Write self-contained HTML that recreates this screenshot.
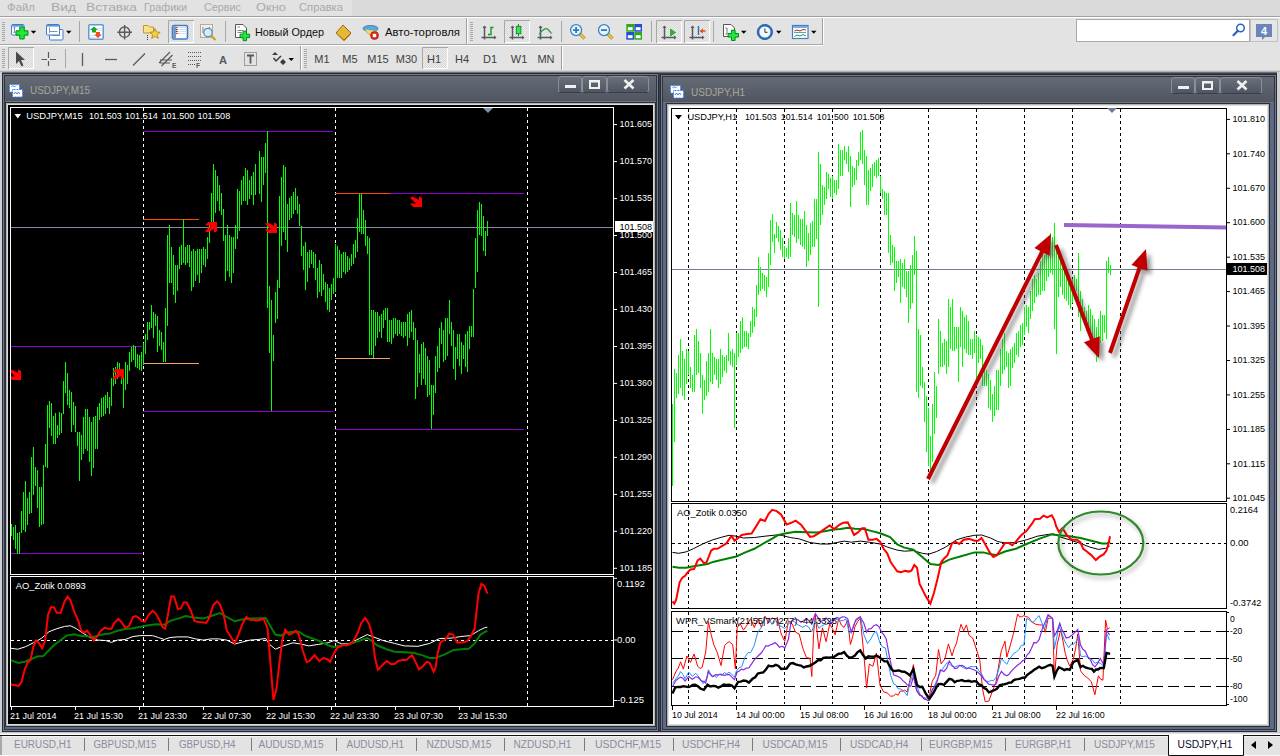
<!DOCTYPE html>
<html><head><meta charset="utf-8"><style>
html,body{margin:0;padding:0;width:1280px;height:756px;overflow:hidden;background:#e3e3e3}
svg{display:block}
text{font-family:"Liberation Sans", sans-serif}
</style></head><body>
<svg width="1280" height="756" viewBox="0 0 1280 756">
<defs>
<pattern id="dots" width="2" height="2" patternUnits="userSpaceOnUse"><rect width="2" height="2" fill="#ececec"/><rect width="1" height="1" fill="#d8d8d8"/><rect x="1" y="1" width="1" height="1" fill="#d8d8d8"/></pattern>
<linearGradient id="title" x1="0" y1="0" x2="0" y2="1"><stop offset="0" stop-color="#656b75"/><stop offset="1" stop-color="#4f5661"/></linearGradient>
<linearGradient id="btn" x1="0" y1="0" x2="0" y2="1"><stop offset="0" stop-color="#6a717c"/><stop offset="1" stop-color="#4e5560"/></linearGradient>
<filter id="blur" x="-20%" y="-20%" width="140%" height="140%"><feGaussianBlur stdDeviation="2"/></filter>
</defs>
<rect x="0" y="0" width="1280" height="756" fill="#e3e3e3" />
<rect x="0" y="0" width="1280" height="16" fill="#dadada" />
<rect x="0" y="0" width="352" height="16" fill="#e2e2e2" />
<text x="7" y="11.2" font-size="11.5" fill="#a9a9a9" text-anchor="start" font-weight="normal" textLength="28" lengthAdjust="spacingAndGlyphs" >Файл</text>
<text x="51" y="11.2" font-size="11.5" fill="#a9a9a9" text-anchor="start" font-weight="normal" textLength="25" lengthAdjust="spacingAndGlyphs" >Вид</text>
<text x="86" y="11.2" font-size="11.5" fill="#a9a9a9" text-anchor="start" font-weight="normal" textLength="51" lengthAdjust="spacingAndGlyphs" >Вставка</text>
<text x="144" y="11.2" font-size="11.5" fill="#a9a9a9" text-anchor="start" font-weight="normal" textLength="43" lengthAdjust="spacingAndGlyphs" >Графики</text>
<text x="204" y="11.2" font-size="11.5" fill="#a9a9a9" text-anchor="start" font-weight="normal" textLength="37" lengthAdjust="spacingAndGlyphs" >Сервис</text>
<text x="256" y="11.2" font-size="11.5" fill="#a9a9a9" text-anchor="start" font-weight="normal" textLength="30" lengthAdjust="spacingAndGlyphs" >Окно</text>
<text x="299" y="11.2" font-size="11.5" fill="#a9a9a9" text-anchor="start" font-weight="normal" textLength="44" lengthAdjust="spacingAndGlyphs" >Справка</text>
<line x1="0" y1="16.5" x2="1280" y2="16.5" stroke="#a0a0a0" stroke-width="1" />
<line x1="0" y1="17.5" x2="1280" y2="17.5" stroke="#ffffff" stroke-width="1" />
<line x1="0" y1="44.5" x2="823" y2="44.5" stroke="#a8a8a8" stroke-width="1" />
<line x1="0" y1="45.5" x2="823" y2="45.5" stroke="#ffffff" stroke-width="1" />
<line x1="466.5" y1="18" x2="466.5" y2="44" stroke="#a0a0a0" stroke-width="1" />
<line x1="467.5" y1="18" x2="467.5" y2="44" stroke="#ffffff" stroke-width="1" />
<line x1="822.5" y1="18" x2="822.5" y2="44" stroke="#a0a0a0" stroke-width="1" />
<line x1="823.5" y1="18" x2="823.5" y2="44" stroke="#ffffff" stroke-width="1" />
<line x1="300.5" y1="46" x2="300.5" y2="71" stroke="#a0a0a0" stroke-width="1" />
<line x1="301.5" y1="46" x2="301.5" y2="71" stroke="#ffffff" stroke-width="1" />
<line x1="561.5" y1="46" x2="561.5" y2="71" stroke="#a0a0a0" stroke-width="1" />
<line x1="562.5" y1="46" x2="562.5" y2="71" stroke="#ffffff" stroke-width="1" />
<rect x="2" y="22" width="3" height="1" fill="#a8a8a8" />
<rect x="2" y="24" width="3" height="1" fill="#a8a8a8" />
<rect x="2" y="26" width="3" height="1" fill="#a8a8a8" />
<rect x="2" y="28" width="3" height="1" fill="#a8a8a8" />
<rect x="2" y="30" width="3" height="1" fill="#a8a8a8" />
<rect x="2" y="32" width="3" height="1" fill="#a8a8a8" />
<rect x="2" y="34" width="3" height="1" fill="#a8a8a8" />
<rect x="2" y="36" width="3" height="1" fill="#a8a8a8" />
<rect x="2" y="38" width="3" height="1" fill="#a8a8a8" />
<rect x="2" y="40" width="3" height="1" fill="#a8a8a8" />
<rect x="470" y="22" width="3" height="1" fill="#a8a8a8" />
<rect x="470" y="24" width="3" height="1" fill="#a8a8a8" />
<rect x="470" y="26" width="3" height="1" fill="#a8a8a8" />
<rect x="470" y="28" width="3" height="1" fill="#a8a8a8" />
<rect x="470" y="30" width="3" height="1" fill="#a8a8a8" />
<rect x="470" y="32" width="3" height="1" fill="#a8a8a8" />
<rect x="470" y="34" width="3" height="1" fill="#a8a8a8" />
<rect x="470" y="36" width="3" height="1" fill="#a8a8a8" />
<rect x="470" y="38" width="3" height="1" fill="#a8a8a8" />
<rect x="470" y="40" width="3" height="1" fill="#a8a8a8" />
<rect x="2" y="49" width="3" height="1" fill="#a8a8a8" />
<rect x="2" y="51" width="3" height="1" fill="#a8a8a8" />
<rect x="2" y="53" width="3" height="1" fill="#a8a8a8" />
<rect x="2" y="55" width="3" height="1" fill="#a8a8a8" />
<rect x="2" y="57" width="3" height="1" fill="#a8a8a8" />
<rect x="2" y="59" width="3" height="1" fill="#a8a8a8" />
<rect x="2" y="61" width="3" height="1" fill="#a8a8a8" />
<rect x="2" y="63" width="3" height="1" fill="#a8a8a8" />
<rect x="2" y="65" width="3" height="1" fill="#a8a8a8" />
<rect x="2" y="67" width="3" height="1" fill="#a8a8a8" />
<rect x="304" y="49" width="3" height="1" fill="#a8a8a8" />
<rect x="304" y="51" width="3" height="1" fill="#a8a8a8" />
<rect x="304" y="53" width="3" height="1" fill="#a8a8a8" />
<rect x="304" y="55" width="3" height="1" fill="#a8a8a8" />
<rect x="304" y="57" width="3" height="1" fill="#a8a8a8" />
<rect x="304" y="59" width="3" height="1" fill="#a8a8a8" />
<rect x="304" y="61" width="3" height="1" fill="#a8a8a8" />
<rect x="304" y="63" width="3" height="1" fill="#a8a8a8" />
<rect x="304" y="65" width="3" height="1" fill="#a8a8a8" />
<rect x="304" y="67" width="3" height="1" fill="#a8a8a8" />
<line x1="79.5" y1="21" x2="79.5" y2="42" stroke="#a8a8a8" stroke-width="1" />
<line x1="225.5" y1="21" x2="225.5" y2="42" stroke="#a8a8a8" stroke-width="1" />
<line x1="561.5" y1="21" x2="561.5" y2="42" stroke="#a8a8a8" stroke-width="1" />
<line x1="651.5" y1="21" x2="651.5" y2="42" stroke="#a8a8a8" stroke-width="1" />
<line x1="713.5" y1="21" x2="713.5" y2="42" stroke="#a8a8a8" stroke-width="1" />
<line x1="65.5" y1="49" x2="65.5" y2="68" stroke="#a8a8a8" stroke-width="1" />
<rect x="168" y="20" width="26" height="23" fill="url(#dots)"/>
<path d="M168.5 43 V20.5 H194" stroke="#a8a8a8" fill="none"/>
<path d="M193.5 21 V42.5 H169" stroke="#ffffff" fill="none"/>
<rect x="504" y="20" width="26" height="23" fill="url(#dots)"/>
<path d="M504.5 43 V20.5 H530" stroke="#a8a8a8" fill="none"/>
<path d="M529.5 21 V42.5 H505" stroke="#ffffff" fill="none"/>
<rect x="656" y="20" width="26" height="23" fill="url(#dots)"/>
<path d="M656.5 43 V20.5 H682" stroke="#a8a8a8" fill="none"/>
<path d="M681.5 21 V42.5 H657" stroke="#ffffff" fill="none"/>
<rect x="684" y="20" width="26" height="23" fill="url(#dots)"/>
<path d="M684.5 43 V20.5 H710" stroke="#a8a8a8" fill="none"/>
<path d="M709.5 21 V42.5 H685" stroke="#ffffff" fill="none"/>
<rect x="8" y="47" width="26" height="22" fill="url(#dots)"/>
<path d="M8.5 69 V47.5 H34" stroke="#a8a8a8" fill="none"/>
<path d="M33.5 48 V68.5 H9" stroke="#ffffff" fill="none"/>
<rect x="422" y="47" width="26" height="22" fill="url(#dots)"/>
<path d="M422.5 69 V47.5 H448" stroke="#a8a8a8" fill="none"/>
<path d="M447.5 48 V68.5 H423" stroke="#ffffff" fill="none"/>
<text x="322" y="63" font-size="11" fill="#404040" text-anchor="middle" font-weight="normal" >M1</text>
<text x="350" y="63" font-size="11" fill="#404040" text-anchor="middle" font-weight="normal" >M5</text>
<text x="378" y="63" font-size="11" fill="#404040" text-anchor="middle" font-weight="normal" >M15</text>
<text x="406.5" y="63" font-size="11" fill="#404040" text-anchor="middle" font-weight="normal" >M30</text>
<text x="434" y="63" font-size="11" fill="#404040" text-anchor="middle" font-weight="normal" >H1</text>
<text x="462" y="63" font-size="11" fill="#404040" text-anchor="middle" font-weight="normal" >H4</text>
<text x="490" y="63" font-size="11" fill="#404040" text-anchor="middle" font-weight="normal" >D1</text>
<text x="519" y="63" font-size="11" fill="#404040" text-anchor="middle" font-weight="normal" >W1</text>
<text x="546" y="63" font-size="11" fill="#404040" text-anchor="middle" font-weight="normal" >MN</text>
<text x="255" y="36" font-size="11.5" fill="#101010" text-anchor="start" font-weight="normal" textLength="69" lengthAdjust="spacingAndGlyphs" >Новый Ордер</text>
<text x="385" y="36" font-size="11.5" fill="#101010" text-anchor="start" font-weight="normal" textLength="75" lengthAdjust="spacingAndGlyphs" >Авто-торговля</text>
<rect x="1076.5" y="19.5" width="173" height="22" fill="#ffffff" stroke="#a8a8a8"/>
<rect x="1250.5" y="19.5" width="27" height="22" fill="#e6e6e6" stroke="#c0c0c0"/>
<rect x="11.5" y="24.5" width="12.5" height="10.5" rx="1" fill="#fff" stroke="#3d7fc9"/>
<rect x="12" y="25" width="11.5" height="1.6" fill="#5b97d8"/>
<path d="M14.5 27 V33 M13.3 28.2 L14.5 27 L15.7 28.2 M13.3 31.8 L14.5 33 L15.7 31.8" stroke="#7d98b3" stroke-width="1" fill="none"/>
<path d="M16 30.8 H19.8 V27 H24.2 V30.8 H28 V35.2 H24.2 V39 H19.8 V35.2 H16 Z" fill="#1ee83a" stroke="#0a8a1c" stroke-width="1"/>
<path d="M30.75 30.75 H36.25 L33.5 33.75 Z" fill="#000"/>
<rect x="49.5" y="29.5" width="13.5" height="10.5" rx="1" fill="#fff" stroke="#3d7fc9"/>
<path d="M51.5 35.5 H60.5" stroke="#7d98b3"/>
<rect x="46.5" y="24.5" width="13" height="10.5" rx="1" fill="#fff" stroke="#3d7fc9"/>
<rect x="47" y="25" width="12" height="1.6" fill="#5b97d8"/>
<path d="M49.5 27.5 V33 M49.5 31.5 H57.5" stroke="#7d98b3" fill="none"/>
<path d="M66 30.75 H71.5 L68.75 33.75 Z" fill="#000"/>
<rect x="88.75" y="24.75" width="14.5" height="14.5" rx="1.2" fill="#fff" stroke="#5a9ae0" stroke-width="1.5"/>
<path d="M94 26.5 L98 30 H96 V32.5 H92 V30 H90 Z" fill="#1aa82a"/>
<path d="M98 38 L102 34.5 H100 V32 H96 V34.5 H94 Z" fill="#e8502a"/>
<path d="M97 28.5 H102 M97 30.5 H102 M90 35.5 H95 M90 37.5 H95" stroke="#d8d8d8" stroke-width="0.8"/>
<circle cx="124.6" cy="32.2" r="5.2" fill="none" stroke="#5a5a5a" stroke-width="1.4"/>
<path d="M124.6 25 V39.5 M117.3 32.2 H132" stroke="#5a5a5a" stroke-width="1.4"/>
<path d="M143.5 25.5 H148 L149.5 27 H153.5 V33 H143.5 Z" fill="#f7e28a" stroke="#c9952a"/>
<path d="M155 28.5 L156.5 32 L160.2 32.3 L157.4 34.7 L158.3 38.4 L155 36.4 L151.7 38.4 L152.6 34.7 L149.8 32.3 L153.5 32 Z" fill="#f3d23c" stroke="#b8861e" stroke-width="0.9"/>
<path d="M147.5 35 V40" stroke="#333" stroke-dasharray="1 1"/>
<rect x="172.5" y="25.5" width="15" height="13.5" rx="1.5" fill="#fff" stroke="#3d7fc9" stroke-width="1.6"/>
<rect x="173.3" y="26.3" width="2.6" height="12" fill="#6a90c0"/>
<path d="M177 27.5 H187 M177 29.5 H187 M177 31.5 H187 M177 33.5 H187" stroke="#c8d8f0" stroke-width="0.8"/>
<circle cx="176.8" cy="27.5" r="0.8" fill="#e02020"/><circle cx="176.8" cy="29.5" r="0.8" fill="#204020"/><circle cx="176.8" cy="31.5" r="0.8" fill="#204020"/><circle cx="176.8" cy="33.5" r="0.8" fill="#e02020"/>
<rect x="200.5" y="24.5" width="12" height="13" fill="#f4f0e8" stroke="#b8ac90"/>
<path d="M203 27 V33 M209.5 27 V33" stroke="#7a8a9a"/>
<circle cx="208" cy="32.5" r="4.2" fill="#d8ecf8" fill-opacity="0.9" stroke="#5a90c8" stroke-width="1.3"/>
<path d="M211 35.5 L215.5 40" stroke="#c8a020" stroke-width="2.2"/>
<path d="M235.5 24.5 H243 L246.5 28 V37.5 H235.5 Z" fill="#fff" stroke="#555"/>
<path d="M237.5 27 H240 M237.5 30.5 H243 M237.5 32.5 H242" stroke="#777" stroke-width="0.9"/>
<path d="M240.0 34.199999999999996 H243.10000000000002 V31.099999999999998 H246.5 V34.199999999999996 H249.60000000000002 V37.6 H246.5 V40.699999999999996 H243.10000000000002 V37.6 H240.0 Z" fill="#1ee83a" stroke="#0a8a1c" stroke-width="1"/>
<path d="M336 33 L343 25 L351 33 L344 40 Z" fill="#e7b838" stroke="#9a6a18" stroke-width="1"/>
<path d="M337 34.5 L344 41 L350.5 34.5" fill="none" stroke="#c89030" stroke-width="1"/>
<ellipse cx="370.5" cy="28.5" rx="7.5" ry="3" fill="#5aa8e0" stroke="#2a70b0" stroke-width="0.8"/>
<path d="M365 29.5 Q370.5 40 377 31" fill="#f4dc60" stroke="#c8a030" stroke-width="0.8"/>
<circle cx="374.5" cy="35.5" r="4" fill="#e02818" stroke="#a01010" stroke-width="0.6"/>
<rect x="372.8" y="33.8" width="3.4" height="3.4" fill="#fff"/>
<path d="M484.5 26 V39.5 M481.5 37.5 H495.5" stroke="#555a5e" stroke-width="1.5"/>
<path d="M482.5 28 L484.5 25.5 L486.5 28 Z M494 35.5 L496.5 37.5 L494 39.5 Z" fill="#555a5e"/>
<path d="M488 34.5 H491 V27.5 H493.5" stroke="#119a22" stroke-width="1.4" fill="none"/>
<path d="M512.5 26 V39.5 M509.5 37.5 H523.5" stroke="#555a5e" stroke-width="1.5"/>
<path d="M510.5 28 L512.5 25.5 L514.5 28 Z M522 35.5 L524.5 37.5 L522 39.5 Z" fill="#555a5e"/>
<path d="M518.5 24 V36" stroke="#0a8a1c" stroke-width="1"/>
<rect x="516.3" y="26.3" width="4.6" height="7.4" fill="#3ee060" stroke="#0a8a1c" stroke-width="0.9"/>
<path d="M540.5 26 V39.5 M537.5 37.5 H551.5" stroke="#555a5e" stroke-width="1.5"/>
<path d="M538.5 28 L540.5 25.5 L542.5 28 Z M550 35.5 L552.5 37.5 L550 39.5 Z" fill="#555a5e"/>
<path d="M539 34.5 Q545 26 548.5 30 T551.5 33" fill="none" stroke="#2a9a3a" stroke-width="1.2"/>
<path d="M579.6 33.6 L584.6 38.6" stroke="#b08010" stroke-width="3"/>
<path d="M579.6 33.6 L584.6 38.6" stroke="#f0d040" stroke-width="1.6"/>
<circle cx="576.1" cy="30.1" r="5.5" fill="#e4f4fc" stroke="#3a80c8" stroke-width="1.3"/>
<path d="M573.1 30.1 H579.1" stroke="#3a7aa8" stroke-width="1.8"/>
<path d="M576.1 27.1 V33.1" stroke="#3a7aa8" stroke-width="1.8"/>
<path d="M607.5 33.6 L612.5 38.6" stroke="#b08010" stroke-width="3"/>
<path d="M607.5 33.6 L612.5 38.6" stroke="#f0d040" stroke-width="1.6"/>
<circle cx="604" cy="30.1" r="5.5" fill="#e4f4fc" stroke="#3a80c8" stroke-width="1.3"/>
<path d="M601 30.1 H607" stroke="#3a7aa8" stroke-width="1.8"/>
<rect x="626.3" y="24" width="7.7" height="7.7" fill="#2ea81a"/>
<rect x="627.8" y="27.2" width="4.8" height="3" fill="#fff"/>
<rect x="634.3" y="24" width="7.7" height="7.7" fill="#2050d0"/>
<rect x="635.8" y="27.2" width="4.8" height="3" fill="#fff"/>
<rect x="626.3" y="32" width="7.7" height="7.7" fill="#2050d0"/>
<rect x="627.8" y="35.2" width="4.8" height="3" fill="#fff"/>
<rect x="634.3" y="32" width="7.7" height="7.7" fill="#2ea81a"/>
<rect x="635.8" y="35.2" width="4.8" height="3" fill="#fff"/>
<path d="M664.5 26 V39.5 M661.5 37.5 H675.5" stroke="#555a5e" stroke-width="1.5"/>
<path d="M662.5 28 L664.5 25.5 L666.5 28 Z M674 35.5 L676.5 37.5 L674 39.5 Z" fill="#555a5e"/>
<path d="M670.5 29 L675.5 32.5 L670.5 36 Z" fill="#26b826" stroke="#118a11" stroke-width="0.6"/>
<path d="M692.5 26 V39.5 M689.5 37.5 H703.5" stroke="#555a5e" stroke-width="1.5"/>
<path d="M690.5 28 L692.5 25.5 L694.5 28 Z M702 35.5 L704.5 37.5 L702 39.5 Z" fill="#555a5e"/>
<path d="M698.5 26 V35" stroke="#2a70b0" stroke-width="1.4"/>
<path d="M699.5 31 L703 28.5 V30.3 H705.5 V31.7 H703 V33.5 Z" fill="#e05010"/>
<path d="M723.5 24.5 H731 L734.5 28 V36.5 H723.5 Z" fill="#fff" stroke="#555"/>
<path d="M725.5 28 H727 V34 H725.5" stroke="#666" fill="none" stroke-width="0.9"/>
<path d="M728.0999999999999 33.5 H731.5 V30.099999999999998 H735.0999999999999 V33.5 H738.5 V37.099999999999994 H735.0999999999999 V40.5 H731.5 V37.099999999999994 H728.0999999999999 Z" fill="#1ee83a" stroke="#0a8a1c" stroke-width="1"/>
<path d="M741 30.75 H746.5 L743.75 33.75 Z" fill="#000"/>
<circle cx="764.9" cy="32" r="7.6" fill="#2a70c8" stroke="#1a4a98" stroke-width="0.8"/>
<circle cx="764.9" cy="32" r="5.6" fill="#f4f8fc"/>
<path d="M764.9 28.5 V32.3 H767.5" stroke="#333" stroke-width="1" fill="none"/>
<path d="M776 30.75 H781.5 L778.75 33.75 Z" fill="#000"/>
<rect x="792.5" y="25.5" width="15.5" height="13" fill="#fff" stroke="#3d7fc9" stroke-width="1.2"/>
<rect x="793" y="26" width="14.5" height="2" fill="#7aa8e0"/>
<path d="M794 32.5 H806" stroke="#3d7fc9" stroke-width="0.8"/>
<path d="M794.5 31 L797 30 L800 31 L803 29.5 L806 30" stroke="#a03020" stroke-width="1" fill="none"/>
<path d="M794.5 36.5 L797 35 L800 36 L803 34.5 L806 36" stroke="#2a9a2a" stroke-width="1" fill="none"/>
<path d="M811 30.75 H816.5 L813.75 33.75 Z" fill="#000"/>
<circle cx="1240.5" cy="28" r="3.8" fill="none" stroke="#2a62c8" stroke-width="1.5"/>
<path d="M1237.8 30.8 L1233.5 35.2" stroke="#2a62c8" stroke-width="2.2" stroke-linecap="round"/>
<path d="M1256 24 H1272 V37 H1265 L1262 40 V37 H1256 Z" fill="#6a86b8"/>
<text x="1264" y="35" font-size="11" fill="#fff" text-anchor="middle" font-weight="bold">4</text>
<path d="M16 51.5 L16 64 L19 61 L21.5 66.5 L23.5 65.5 L21 60 L25 60 Z" fill="#4a4a4a"/>
<path d="M48.5 52 V66 M41.5 59.5 H56" stroke="#555a5e" stroke-width="1.2"/>
<rect x="47" y="58" width="3" height="3" fill="#e3e3e3"/>
<path d="M82.5 53 V66" stroke="#555a5e" stroke-width="1.3"/>
<path d="M105 59.5 H117" stroke="#555a5e" stroke-width="1.3"/>
<path d="M133 65.5 L145 53.5" stroke="#555a5e" stroke-width="1.3"/>
<path d="M159 63 L170 52 M161.5 66 L172.5 55 M160 60 H172 M160 63 H170" stroke="#555a5e" stroke-width="1.2"/>
<text x="172" y="68" font-size="6.5" fill="#555a5e" font-weight="bold">E</text>
<path d="M188 52.5 H201 M188 56.5 H201 M188 60.5 H201 M188 64.5 H196" stroke="#555a5e" stroke-width="1" stroke-dasharray="1 1"/>
<text x="196" y="68" font-size="6.5" fill="#555a5e" font-weight="bold">F</text>
<text x="219" y="64.2" font-size="11.5" fill="#555a5e" font-weight="bold" textLength="8" lengthAdjust="spacingAndGlyphs">A</text>
<rect x="244.5" y="52.5" width="12" height="13" fill="none" stroke="#555a5e" stroke-width="1" stroke-dasharray="1 1"/>
<path d="M247 55.5 H254 M250.5 55.5 V63.5" stroke="#555a5e" stroke-width="1.8"/>
<path d="M272 55 L275 52 L278 55 Z M280 62 L283 59 L286 62 L283 65 Z" fill="#3a3a3a"/>
<path d="M273.5 58 L276 61 L281 56" stroke="#3a3a3a" stroke-width="1.5" fill="none"/>
<path d="M288.5 58 H294 L291.25 61 Z" fill="#000"/>
<rect x="0" y="71" width="1280" height="664" fill="#d0d0d0" />
<rect x="2" y="72" width="1275" height="660" fill="#3c4048" />
<line x1="0" y1="732.5" x2="1280" y2="732.5" stroke="#c4c4c4" stroke-width="1" />
<line x1="0" y1="733.5" x2="1280" y2="733.5" stroke="#e4e4e4" stroke-width="1" />
<line x1="0" y1="70.5" x2="1280" y2="70.5" stroke="#d4d4d4" stroke-width="1" />
<line x1="0" y1="71.5" x2="1280" y2="71.5" stroke="#b0b0b0" stroke-width="1" />
<line x1="2" y1="72.5" x2="1277" y2="72.5" stroke="#6e6e6e" stroke-width="1" />
<rect x="2" y="73" width="657" height="659" fill="#262a32" />
<rect x="3" y="74" width="655" height="657" fill="#6e7a96" />
<rect x="4" y="75" width="653" height="655" fill="#30343c" />
<rect x="5" y="76" width="651" height="653" fill="#5c6884" />
<rect x="5" y="76" width="651" height="25" fill="url(#title)"/>
<line x1="5" y1="101.5" x2="656" y2="101.5" stroke="#6e7480" stroke-width="1" />
<rect x="5" y="102" width="651" height="625" fill="#2a2e36" />
<rect x="6" y="103" width="649" height="623" fill="#b4b4b4" />
<rect x="7" y="104" width="647" height="621" fill="#dcdcdc" />
<rect x="8" y="105" width="645" height="619" fill="#000000" />
<rect x="660" y="74" width="617" height="658" fill="#262a32" />
<rect x="661" y="75" width="615" height="656" fill="#6e7a96" />
<rect x="662" y="76" width="613" height="654" fill="#30343c" />
<rect x="663" y="77" width="611" height="652" fill="#5c6884" />
<rect x="663" y="77" width="611" height="25" fill="url(#title)"/>
<line x1="663" y1="102.5" x2="1274" y2="102.5" stroke="#6e7480" stroke-width="1" />
<rect x="666" y="103" width="604" height="624" fill="#2a2e36" />
<rect x="667" y="104" width="602" height="622" fill="#b4b4b4" />
<rect x="668" y="105" width="600" height="620" fill="#dcdcdc" />
<rect x="669" y="106" width="598" height="618" fill="#ffffff" />
<text x="30" y="94" font-size="11.5" fill="#a8a498" text-anchor="start" font-weight="normal" textLength="60" lengthAdjust="spacingAndGlyphs" >USDJPY,M15</text>
<rect x="9.5" y="84.5" width="10" height="7.5" fill="#fff" stroke="#3a80f0" stroke-dasharray="1 0.5"/>
<rect x="12.5" y="89.5" width="10" height="7.5" fill="#fff" stroke="#3a80f0" stroke-dasharray="1 0.5"/>
<path d="M14 94 l1.5 -2 l1.5 2 l1.5 -2 l1.5 2" stroke="#3a70d0" fill="none" stroke-width="0.9"/>
<path d="M11.5 87 l1.5 -1.5 l1.5 1.5 l1.5 -1.5" stroke="#3a70d0" fill="none" stroke-width="0.9"/>
<rect x="670.5" y="85.5" width="10" height="7.5" fill="#fff" stroke="#3a80f0" stroke-dasharray="1 0.5"/>
<rect x="673.5" y="90.5" width="10" height="7.5" fill="#fff" stroke="#3a80f0" stroke-dasharray="1 0.5"/>
<path d="M675 95 l1.5 -2 l1.5 2 l1.5 -2 l1.5 2" stroke="#3a70d0" fill="none" stroke-width="0.9"/>
<path d="M672.5 88 l1.5 -1.5 l1.5 1.5 l1.5 -1.5" stroke="#3a70d0" fill="none" stroke-width="0.9"/>
<text x="691" y="96" font-size="11.5" fill="#a8a498" text-anchor="start" font-weight="normal" textLength="54" lengthAdjust="spacingAndGlyphs" >USDJPY,H1</text>
<rect x="558.5" y="76.5" width="23" height="16" rx="2.5" fill="url(#btn)" stroke="#8a909a"/>
<path d="M559 92.5 H581" stroke="#3a3e46"/>
<rect x="582.5" y="76.5" width="24" height="16" rx="2.5" fill="url(#btn)" stroke="#8a909a"/>
<path d="M583 92.5 H606" stroke="#3a3e46"/>
<rect x="607.5" y="76.5" width="41" height="16" rx="2.5" fill="url(#btn)" stroke="#8a909a"/>
<path d="M608 92.5 H648" stroke="#3a3e46"/>
<rect x="565" y="85" width="11" height="3" fill="#f0f0f0" />
<rect x="590" y="81" width="9" height="7" fill="none" stroke="#f0f0f0" stroke-width="2"/>
<rect x="589" y="80" width="11" height="2.5" fill="#f0f0f0" />
<path d="M624.5 80 L633.5 88.5 M633.5 80 L624.5 88.5" stroke="#f0f0f0" stroke-width="2.6"/>
<rect x="1171.5" y="77.5" width="23" height="16" rx="2.5" fill="url(#btn)" stroke="#8a909a"/>
<path d="M1172 93.5 H1194" stroke="#3a3e46"/>
<rect x="1195.5" y="77.5" width="24" height="16" rx="2.5" fill="url(#btn)" stroke="#8a909a"/>
<path d="M1196 93.5 H1219" stroke="#3a3e46"/>
<rect x="1220.5" y="77.5" width="41" height="16" rx="2.5" fill="url(#btn)" stroke="#8a909a"/>
<path d="M1221 93.5 H1261" stroke="#3a3e46"/>
<rect x="1178" y="86" width="11" height="3" fill="#f0f0f0" />
<rect x="1203" y="82" width="9" height="7" fill="none" stroke="#f0f0f0" stroke-width="2"/>
<rect x="1202" y="81" width="11" height="2.5" fill="#f0f0f0" />
<path d="M1237.5 81 L1246.5 89.5 M1246.5 81 L1237.5 89.5" stroke="#f0f0f0" stroke-width="2.6"/>
<line x1="143.5" y1="108" x2="143.5" y2="574" stroke="#ffffff" stroke-dasharray="3 3"/>
<line x1="143.5" y1="577" x2="143.5" y2="706" stroke="#ffffff" stroke-dasharray="3 3"/>
<line x1="335.5" y1="108" x2="335.5" y2="574" stroke="#ffffff" stroke-dasharray="3 3"/>
<line x1="335.5" y1="577" x2="335.5" y2="706" stroke="#ffffff" stroke-dasharray="3 3"/>
<line x1="527.5" y1="108" x2="527.5" y2="574" stroke="#ffffff" stroke-dasharray="3 3"/>
<line x1="527.5" y1="577" x2="527.5" y2="706" stroke="#ffffff" stroke-dasharray="3 3"/>
<line x1="143" y1="131.5" x2="333" y2="131.5" stroke="#9400d3" stroke-width="1"/>
<line x1="10" y1="346.5" x2="142" y2="346.5" stroke="#9400d3" stroke-width="1"/>
<line x1="10" y1="553.5" x2="142" y2="553.5" stroke="#9400d3" stroke-width="1"/>
<line x1="143" y1="411.5" x2="333" y2="411.5" stroke="#9400d3" stroke-width="1"/>
<line x1="335" y1="193.5" x2="524" y2="193.5" stroke="#9400d3" stroke-width="1"/>
<line x1="335" y1="429.5" x2="524" y2="429.5" stroke="#9400d3" stroke-width="1"/>
<line x1="143" y1="219.5" x2="199" y2="219.5" stroke="#ff4500" stroke-width="1"/>
<line x1="143" y1="363.5" x2="199" y2="363.5" stroke="#f4a460" stroke-width="1"/>
<line x1="335" y1="193.5" x2="390" y2="193.5" stroke="#ff4500" stroke-width="1"/>
<line x1="335" y1="358.5" x2="390" y2="358.5" stroke="#f4a460" stroke-width="1"/>
<line x1="11" y1="227.5" x2="613" y2="227.5" stroke="#7f8fa0" stroke-width="1"/>
<path d="M11.5 524V536 M13.5 527V540 M15.5 525V549 M17.5 533V554 M19.5 532V554 M21.5 511V533 M23.5 492V530 M25.5 481V532 M27.5 498V525 M29.5 492V514 M31.5 457V513 M33.5 447V495 M35.5 467V486 M37.5 470V508 M39.5 487V527 M41.5 487V525 M43.5 465V524 M45.5 444V467 M47.5 405V468 M49.5 401V428 M51.5 403V436 M53.5 416V444 M55.5 413V444 M57.5 425V438 M59.5 412V435 M61.5 413V433 M63.5 381V414 M65.5 362V393 M67.5 373V405 M69.5 390V408 M71.5 392V432 M73.5 402V425 M75.5 406V432 M77.5 432V446 M79.5 432V481 M81.5 435V460 M83.5 417V454 M85.5 409V449 M87.5 409V451 M89.5 417V462 M91.5 422V476 M93.5 417V468 M95.5 416V449 M97.5 407V449 M99.5 403V420 M101.5 398V417 M103.5 397V416 M105.5 395V414 M107.5 392V408 M109.5 397V414 M111.5 378V406 M113.5 368V386 M115.5 367V384 M117.5 362V379 M119.5 363V374 M121.5 370V384 M123.5 373V408 M125.5 362V390 M127.5 365V384 M129.5 352V371 M131.5 347V362 M133.5 345V360 M135.5 346V367 M137.5 354V368 M139.5 355V370 M141.5 352V371 M143.5 343V365 M145.5 334V354 M147.5 322V340 M149.5 322V330 M151.5 305V328 M153.5 312V338 M155.5 314V326 M157.5 316V352 M159.5 330V346 M161.5 332V350 M163.5 342V362 M165.5 308V362 M167.5 235V326 M169.5 225V283 M171.5 247V283 M173.5 255V295 M175.5 265V303 M177.5 265V291 M179.5 247V269 M181.5 245V265 M183.5 219V263 M185.5 247V265 M187.5 245V263 M189.5 245V267 M191.5 251V291 M193.5 249V287 M195.5 251V281 M197.5 249V275 M199.5 249V283 M201.5 249V273 M203.5 247V265 M205.5 249V267 M207.5 237V259 M209.5 223V243 M211.5 193V227 M213.5 164V223 M215.5 170V213 M217.5 176V201 M219.5 185V211 M221.5 193V215 M223.5 209V241 M225.5 235V281 M227.5 225V271 M229.5 235V277 M231.5 237V283 M233.5 237V273 M235.5 225V249 M237.5 189V239 M239.5 191V231 M241.5 180V205 M243.5 176V201 M245.5 168V201 M247.5 170V205 M249.5 180V199 M251.5 176V195 M253.5 172V205 M255.5 164V195 M259.5 151V194 M261.5 157V202 M263.5 157V185 M265.5 143V173 M267.5 131V308 M269.5 286V353 M271.5 300V411 M273.5 335V361 M275.5 292V323 M277.5 280V319 M279.5 196V288 M281.5 177V246 M283.5 165V232 M285.5 167V240 M287.5 204V252 M289.5 198V220 M291.5 196V218 M293.5 192V214 M295.5 188V210 M297.5 196V214 M299.5 204V226 M301.5 226V256 M303.5 246V270 M305.5 242V290 M307.5 252V282 M309.5 250V268 M311.5 250V264 M313.5 252V268 M315.5 254V280 M317.5 268V298 M319.5 260V292 M321.5 264V296 M323.5 274V290 M325.5 282V302 M327.5 284V310 M329.5 288V312 M331.5 284V300 M333.5 278V294 M335.5 244V292 M337.5 246V278 M339.5 250V278 M341.5 254V278 M343.5 252V272 M345.5 252V274 M347.5 256V272 M349.5 258V270 M351.5 254V266 M353.5 244V264 M355.5 240V258 M357.5 218V252 M359.5 194V232 M361.5 194V234 M363.5 210V234 M365.5 220V246 M367.5 236V254 M369.5 238V355 M371.5 310V355 M373.5 310V358 M375.5 312V346 M377.5 312V338 M379.5 316V332 M381.5 314V338 M383.5 310V328 M385.5 308V320 M387.5 308V342 M389.5 320V342 M391.5 320V344 M393.5 318V338 M395.5 318V334 M397.5 320V336 M399.5 320V334 M401.5 322V336 M403.5 322V338 M405.5 322V336 M407.5 314V346 M409.5 312V338 M411.5 310V332 M413.5 322V340 M415.5 328V399 M417.5 340V387 M419.5 354V373 M421.5 344V385 M423.5 342V379 M425.5 348V385 M427.5 356V397 M429.5 360V395 M431.5 385V429 M433.5 385V415 M435.5 356V393 M437.5 346V372 M439.5 328V368 M441.5 322V344 M443.5 330V362 M445.5 318V360 M447.5 318V356 M449.5 300V334 M451.5 322V346 M453.5 330V369 M455.5 347V380 M457.5 334V359 M459.5 334V366 M461.5 342V374 M463.5 345V359 M465.5 334V367 M467.5 331V372 M469.5 326V349 M471.5 326V337 M473.5 289V337 M475.5 238V288 M477.5 210V272 M479.5 202V235 M481.5 204V236 M483.5 216V251 M485.5 231V256 M487.5 221V236" stroke="#00ff00" stroke-width="1" fill="none"/>
<path transform="translate(9,369)" d="M0 7.6 L3.2 11 L12 11 L12 2 L9 0.2 L9 4 L3 0.5 L0 1.7 L6 7.6 Z" fill="#ff0000"/>
<path transform="translate(112,369)" d="M0 3.4 L3.2 0 L12 0 L12 9 L9 10.8 L9 7 L3 10.5 L0 9.3 L6 3.4 Z" fill="#ff0000"/>
<path transform="translate(205,222)" d="M0 3.4 L3.2 0 L12 0 L12 9 L9 10.8 L9 7 L3 10.5 L0 9.3 L6 3.4 Z" fill="#ff0000"/>
<path transform="translate(265,222)" d="M0 7.6 L3.2 11 L12 11 L12 2 L9 0.2 L9 4 L3 0.5 L0 1.7 L6 7.6 Z" fill="#ff0000"/>
<path transform="translate(410,196)" d="M0 7.6 L3.2 11 L12 11 L12 2 L9 0.2 L9 4 L3 0.5 L0 1.7 L6 7.6 Z" fill="#ff0000"/>
<rect x="10.5" y="107.5" width="603" height="467" fill="none" stroke="#ffffff"/>
<rect x="10.5" y="576.5" width="603" height="130" fill="none" stroke="#ffffff"/>
<path d="M483 108 H493 L488 113 Z" fill="#8090a0"/>
<line x1="614" y1="124.6" x2="617" y2="124.6" stroke="#fff"/>
<text x="619.5" y="127.19999999999999" font-size="9.5" fill="#fff" text-anchor="start" font-weight="normal" textLength="32.5" lengthAdjust="spacingAndGlyphs" >101.605</text>
<line x1="614" y1="161.6" x2="617" y2="161.6" stroke="#fff"/>
<text x="619.5" y="164.17499999999998" font-size="9.5" fill="#fff" text-anchor="start" font-weight="normal" textLength="32.5" lengthAdjust="spacingAndGlyphs" >101.570</text>
<line x1="614" y1="198.6" x2="617" y2="198.6" stroke="#fff"/>
<text x="619.5" y="201.15" font-size="9.5" fill="#fff" text-anchor="start" font-weight="normal" textLength="32.5" lengthAdjust="spacingAndGlyphs" >101.535</text>
<line x1="614" y1="235.5" x2="617" y2="235.5" stroke="#fff"/>
<text x="619.5" y="238.125" font-size="9.5" fill="#fff" text-anchor="start" font-weight="normal" textLength="32.5" lengthAdjust="spacingAndGlyphs" >101.500</text>
<line x1="614" y1="272.5" x2="617" y2="272.5" stroke="#fff"/>
<text x="619.5" y="275.1" font-size="9.5" fill="#fff" text-anchor="start" font-weight="normal" textLength="32.5" lengthAdjust="spacingAndGlyphs" >101.465</text>
<line x1="614" y1="309.5" x2="617" y2="309.5" stroke="#fff"/>
<text x="619.5" y="312.07500000000005" font-size="9.5" fill="#fff" text-anchor="start" font-weight="normal" textLength="32.5" lengthAdjust="spacingAndGlyphs" >101.430</text>
<line x1="614" y1="346.5" x2="617" y2="346.5" stroke="#fff"/>
<text x="619.5" y="349.05000000000007" font-size="9.5" fill="#fff" text-anchor="start" font-weight="normal" textLength="32.5" lengthAdjust="spacingAndGlyphs" >101.395</text>
<line x1="614" y1="383.4" x2="617" y2="383.4" stroke="#fff"/>
<text x="619.5" y="386.025" font-size="9.5" fill="#fff" text-anchor="start" font-weight="normal" textLength="32.5" lengthAdjust="spacingAndGlyphs" >101.360</text>
<line x1="614" y1="420.4" x2="617" y2="420.4" stroke="#fff"/>
<text x="619.5" y="423.0" font-size="9.5" fill="#fff" text-anchor="start" font-weight="normal" textLength="32.5" lengthAdjust="spacingAndGlyphs" >101.325</text>
<line x1="614" y1="457.4" x2="617" y2="457.4" stroke="#fff"/>
<text x="619.5" y="459.975" font-size="9.5" fill="#fff" text-anchor="start" font-weight="normal" textLength="32.5" lengthAdjust="spacingAndGlyphs" >101.290</text>
<line x1="614" y1="494.4" x2="617" y2="494.4" stroke="#fff"/>
<text x="619.5" y="496.95000000000005" font-size="9.5" fill="#fff" text-anchor="start" font-weight="normal" textLength="32.5" lengthAdjust="spacingAndGlyphs" >101.255</text>
<line x1="614" y1="531.3" x2="617" y2="531.3" stroke="#fff"/>
<text x="619.5" y="533.9250000000001" font-size="9.5" fill="#fff" text-anchor="start" font-weight="normal" textLength="32.5" lengthAdjust="spacingAndGlyphs" >101.220</text>
<line x1="614" y1="568.3" x2="617" y2="568.3" stroke="#fff"/>
<text x="619.5" y="570.9000000000001" font-size="9.5" fill="#fff" text-anchor="start" font-weight="normal" textLength="32.5" lengthAdjust="spacingAndGlyphs" >101.185</text>
<rect x="615" y="221" width="38" height="11" fill="#ffffff" />
<text x="619.5" y="229.8" font-size="9.5" fill="#000" text-anchor="start" font-weight="normal" textLength="32.5" lengthAdjust="spacingAndGlyphs" >101.508</text>
<text x="26.2" y="119.4" font-size="9.5" fill="#fff" text-anchor="start" font-weight="normal" textLength="56.6" lengthAdjust="spacingAndGlyphs" >USDJPY,M15</text>
<text x="89" y="119.4" font-size="9.5" fill="#fff" text-anchor="start" font-weight="normal" textLength="32.8" lengthAdjust="spacingAndGlyphs" >101.503</text>
<text x="125" y="119.4" font-size="9.5" fill="#fff" text-anchor="start" font-weight="normal" textLength="32.8" lengthAdjust="spacingAndGlyphs" >101.514</text>
<text x="161.5" y="119.4" font-size="9.5" fill="#fff" text-anchor="start" font-weight="normal" textLength="32.8" lengthAdjust="spacingAndGlyphs" >101.500</text>
<text x="197.4" y="119.4" font-size="9.5" fill="#fff" text-anchor="start" font-weight="normal" textLength="32.8" lengthAdjust="spacingAndGlyphs" >101.508</text>
<path d="M14.5 114 H21 L17.75 118.5 Z" fill="#fff"/>
<line x1="11" y1="640.5" x2="613" y2="640.5" stroke="#fff" stroke-dasharray="3 3"/>
<path d="M10.9 648.3 L17.8 649.2 L25.6 646.7 L33.4 642.8 L41.2 638.5 L49.0 631.7 L56.8 628.7 L64.6 626.4 L70.5 625.8 L76.4 628.7 L82.2 632.6 L90.0 637.5 L97.8 640.1 L105.7 640.5 L111.5 642.4 L117.4 640.1 L125.2 639.5 L133.0 636.5 L140.8 635.6 L152.5 635.6 L158.4 637.5 L164.2 639.5 L170.1 637.5 L177.9 636.9 L187.7 636.9 L195.5 638.9 L203.3 640.1 L211.1 638.9 L218.9 638.9 L226.8 640.1 L234.6 644.0 L242.4 642.0 L250.0 640.1 L257.8 639.5 L265.6 638.5 L269.5 644.4 L275.4 649.2 L283.2 645.9 L293.0 642.8 L300.8 644.0 L308.6 645.9 L318.4 644.4 L328.1 642.8 L334.0 640.5 L341.8 644.0 L349.6 643.4 L359.4 638.5 L367.2 634.6 L375.0 637.5 L382.8 640.5 L394.5 643.4 L404.3 645.9 L418.0 646.3 L429.7 643.4 L439.5 638.5 L451.2 638.1 L460.9 636.5 L470.7 635.6 L478.5 630.7 L484.4 627.8 L487.3 627.2" stroke="#ffffff" stroke-width="1" fill="none"/>
<path d="M10.9 660.4 L18.7 662.9 L25.6 661.5 L31.4 659.0 L37.3 656.5 L43.2 656.1 L48.0 651.2 L53.9 645.3 L59.8 640.8 L66.6 635.6 L74.4 634.2 L78.3 635.6 L86.1 636.2 L93.9 636.9 L101.8 634.6 L109.6 633.6 L117.4 630.7 L125.2 629.1 L133.0 628.3 L140.8 626.8 L148.6 625.2 L156.4 624.2 L164.2 624.8 L170.1 620.9 L177.9 618.6 L185.7 616.0 L193.5 617.6 L203.3 618.6 L211.1 616.0 L219.9 613.1 L226.8 617.0 L234.6 621.3 L242.4 619.4 L250.0 618.6 L257.8 618.6 L265.6 618.0 L269.5 624.8 L275.4 634.6 L281.2 635.6 L286.1 632.6 L293.0 631.7 L298.8 631.7 L304.7 635.6 L312.5 638.5 L320.3 641.4 L328.1 645.3 L334.0 647.3 L341.8 645.3 L349.6 644.0 L357.4 641.4 L367.2 638.1 L371.1 640.5 L377.0 645.3 L386.7 649.2 L394.5 651.8 L406.2 652.2 L414.1 653.1 L421.9 655.1 L429.7 658.0 L435.5 658.0 L445.3 654.1 L453.1 650.2 L460.9 649.2 L468.8 648.7 L474.6 643.4 L480.5 634.6 L487.3 630.7" stroke="#008000" stroke-width="2" fill="none"/>
<path d="M10.9 684.4 L18.7 685.8 L21.7 681.5 L24.6 669.8 L27.5 662.9 L30.5 660.0 L33.4 646.3 L36.3 640.5 L39.2 643.4 L42.2 648.3 L45.1 640.5 L48.0 615.1 L51.0 607.2 L53.9 607.2 L56.8 612.7 L60.7 612.7 L64.6 601.4 L67.6 596.5 L70.5 600.4 L74.4 612.1 L78.3 620.9 L81.2 630.7 L84.2 632.6 L87.1 630.7 L90.0 634.6 L93.9 640.5 L96.9 636.5 L100.8 630.7 L104.7 627.8 L108.6 628.7 L111.5 628.7 L114.4 622.9 L118.4 619.0 L121.3 621.9 L125.2 627.8 L129.1 625.8 L133.0 617.0 L135.9 616.0 L138.9 618.0 L141.8 620.9 L144.7 621.9 L148.6 615.1 L152.5 610.8 L155.5 613.1 L159.4 619.9 L162.3 626.8 L165.2 628.7 L168.2 613.1 L171.1 596.5 L174.0 596.5 L177.9 609.2 L180.9 608.2 L183.8 602.4 L186.7 602.4 L190.6 610.2 L194.5 620.9 L198.4 621.9 L202.3 622.3 L206.2 622.9 L209.2 618.0 L213.1 605.3 L217.0 601.4 L219.9 604.3 L223.8 615.1 L226.8 630.7 L230.7 636.5 L234.6 643.4 L238.5 634.6 L242.4 623.9 L246.3 617.0 L250.0 619.9 L257.8 620.5 L263.7 619.0 L267.6 628.7 L270.5 663.9 L273.4 700.0 L276.4 689.3 L279.3 663.9 L282.2 640.5 L285.2 629.7 L289.1 634.6 L292.0 633.6 L295.9 630.7 L298.8 634.6 L302.7 650.2 L306.6 661.9 L309.6 661.0 L314.5 655.1 L319.3 661.0 L323.2 658.0 L327.1 659.0 L330.1 661.9 L334.0 653.1 L337.9 647.3 L342.8 645.3 L347.7 645.3 L352.5 642.4 L357.4 633.6 L361.3 622.9 L365.2 618.0 L369.1 623.9 L372.1 634.6 L375.0 658.0 L377.9 669.8 L381.8 665.8 L386.7 661.0 L390.6 663.9 L394.5 663.9 L398.4 661.0 L402.3 660.0 L406.2 660.0 L412.1 655.1 L416.0 662.9 L418.9 669.4 L422.9 666.2 L426.8 661.9 L429.7 662.9 L433.6 671.7 L435.5 667.8 L437.5 654.1 L440.4 642.4 L445.3 639.5 L449.2 633.6 L453.1 634.6 L457.0 642.4 L461.9 642.4 L466.8 641.4 L470.7 636.5 L474.6 628.7 L478.5 593.6 L481.4 583.8 L484.4 585.8 L487.3 593.6" stroke="#ff0000" stroke-width="2" fill="none"/>
<text x="15.8" y="588.6" font-size="9.5" fill="#fff" text-anchor="start" font-weight="normal" textLength="70" lengthAdjust="spacingAndGlyphs" >AO_Zotik 0.0893</text>
<line x1="614" y1="578.3" x2="617" y2="578.3" stroke="#fff"/>
<line x1="614" y1="640" x2="617" y2="640" stroke="#fff"/>
<line x1="614" y1="700.5" x2="617" y2="700.5" stroke="#fff"/>
<text x="617" y="586.6" font-size="9.5" fill="#fff" text-anchor="start" font-weight="normal" textLength="28" lengthAdjust="spacingAndGlyphs" >0.1192</text>
<text x="617" y="643" font-size="9.5" fill="#fff" text-anchor="start" font-weight="normal" textLength="18.5" lengthAdjust="spacingAndGlyphs" >0.00</text>
<text x="617" y="702.6" font-size="9.5" fill="#fff" text-anchor="start" font-weight="normal" textLength="27" lengthAdjust="spacingAndGlyphs" >-0.125</text>
<line x1="11.5" y1="707" x2="11.5" y2="710" stroke="#fff"/>
<text x="10" y="718.5" font-size="9.5" fill="#fff" text-anchor="start" font-weight="normal" textLength="46.5" lengthAdjust="spacingAndGlyphs" >21 Jul 2014</text>
<line x1="75.5" y1="707" x2="75.5" y2="710" stroke="#fff"/>
<text x="74" y="718.5" font-size="9.5" fill="#fff" text-anchor="start" font-weight="normal" textLength="49" lengthAdjust="spacingAndGlyphs" >21 Jul 15:30</text>
<line x1="139.5" y1="707" x2="139.5" y2="710" stroke="#fff"/>
<text x="138" y="718.5" font-size="9.5" fill="#fff" text-anchor="start" font-weight="normal" textLength="49" lengthAdjust="spacingAndGlyphs" >21 Jul 23:30</text>
<line x1="203.5" y1="707" x2="203.5" y2="710" stroke="#fff"/>
<text x="202" y="718.5" font-size="9.5" fill="#fff" text-anchor="start" font-weight="normal" textLength="49" lengthAdjust="spacingAndGlyphs" >22 Jul 07:30</text>
<line x1="267.5" y1="707" x2="267.5" y2="710" stroke="#fff"/>
<text x="266" y="718.5" font-size="9.5" fill="#fff" text-anchor="start" font-weight="normal" textLength="49" lengthAdjust="spacingAndGlyphs" >22 Jul 15:30</text>
<line x1="331.5" y1="707" x2="331.5" y2="710" stroke="#fff"/>
<text x="330" y="718.5" font-size="9.5" fill="#fff" text-anchor="start" font-weight="normal" textLength="49" lengthAdjust="spacingAndGlyphs" >22 Jul 23:30</text>
<line x1="395.5" y1="707" x2="395.5" y2="710" stroke="#fff"/>
<text x="394" y="718.5" font-size="9.5" fill="#fff" text-anchor="start" font-weight="normal" textLength="49" lengthAdjust="spacingAndGlyphs" >23 Jul 07:30</text>
<line x1="459.5" y1="707" x2="459.5" y2="710" stroke="#fff"/>
<text x="458" y="718.5" font-size="9.5" fill="#fff" text-anchor="start" font-weight="normal" textLength="49" lengthAdjust="spacingAndGlyphs" >23 Jul 15:30</text>
<line x1="688.5" y1="109" x2="688.5" y2="501" stroke="#000" stroke-dasharray="3 3"/>
<line x1="688.5" y1="505" x2="688.5" y2="608" stroke="#000" stroke-dasharray="3 3"/>
<line x1="688.5" y1="612" x2="688.5" y2="704" stroke="#000" stroke-dasharray="3 3"/>
<line x1="736.5" y1="109" x2="736.5" y2="501" stroke="#000" stroke-dasharray="3 3"/>
<line x1="736.5" y1="505" x2="736.5" y2="608" stroke="#000" stroke-dasharray="3 3"/>
<line x1="736.5" y1="612" x2="736.5" y2="704" stroke="#000" stroke-dasharray="3 3"/>
<line x1="784.5" y1="109" x2="784.5" y2="501" stroke="#000" stroke-dasharray="3 3"/>
<line x1="784.5" y1="505" x2="784.5" y2="608" stroke="#000" stroke-dasharray="3 3"/>
<line x1="784.5" y1="612" x2="784.5" y2="704" stroke="#000" stroke-dasharray="3 3"/>
<line x1="832.5" y1="109" x2="832.5" y2="501" stroke="#000" stroke-dasharray="3 3"/>
<line x1="832.5" y1="505" x2="832.5" y2="608" stroke="#000" stroke-dasharray="3 3"/>
<line x1="832.5" y1="612" x2="832.5" y2="704" stroke="#000" stroke-dasharray="3 3"/>
<line x1="880.5" y1="109" x2="880.5" y2="501" stroke="#000" stroke-dasharray="3 3"/>
<line x1="880.5" y1="505" x2="880.5" y2="608" stroke="#000" stroke-dasharray="3 3"/>
<line x1="880.5" y1="612" x2="880.5" y2="704" stroke="#000" stroke-dasharray="3 3"/>
<line x1="928.5" y1="109" x2="928.5" y2="501" stroke="#000" stroke-dasharray="3 3"/>
<line x1="928.5" y1="505" x2="928.5" y2="608" stroke="#000" stroke-dasharray="3 3"/>
<line x1="928.5" y1="612" x2="928.5" y2="704" stroke="#000" stroke-dasharray="3 3"/>
<line x1="976.5" y1="109" x2="976.5" y2="501" stroke="#000" stroke-dasharray="3 3"/>
<line x1="976.5" y1="505" x2="976.5" y2="608" stroke="#000" stroke-dasharray="3 3"/>
<line x1="976.5" y1="612" x2="976.5" y2="704" stroke="#000" stroke-dasharray="3 3"/>
<line x1="1024.5" y1="109" x2="1024.5" y2="501" stroke="#000" stroke-dasharray="3 3"/>
<line x1="1024.5" y1="505" x2="1024.5" y2="608" stroke="#000" stroke-dasharray="3 3"/>
<line x1="1024.5" y1="612" x2="1024.5" y2="704" stroke="#000" stroke-dasharray="3 3"/>
<line x1="1072.5" y1="109" x2="1072.5" y2="501" stroke="#000" stroke-dasharray="3 3"/>
<line x1="1072.5" y1="505" x2="1072.5" y2="608" stroke="#000" stroke-dasharray="3 3"/>
<line x1="1072.5" y1="612" x2="1072.5" y2="704" stroke="#000" stroke-dasharray="3 3"/>
<line x1="1120.5" y1="109" x2="1120.5" y2="501" stroke="#000" stroke-dasharray="3 3"/>
<line x1="1120.5" y1="505" x2="1120.5" y2="608" stroke="#000" stroke-dasharray="3 3"/>
<line x1="1120.5" y1="612" x2="1120.5" y2="704" stroke="#000" stroke-dasharray="3 3"/>
<line x1="671" y1="269.5" x2="1226" y2="269.5" stroke="#708090" stroke-width="1"/>
<path d="M672.5 404V486 M674.5 369V442 M676.5 373V398 M678.5 355V394 M680.5 339V388 M682.5 351V396 M684.5 359V400 M686.5 349V384 M688.5 351V375 M690.5 367V388 M692.5 375V392 M694.5 335V392 M696.5 329V375 M698.5 341V373 M700.5 353V388 M702.5 375V414 M704.5 380V400 M706.5 361V396 M708.5 353V392 M710.5 329V382 M712.5 353V384 M714.5 357V375 M716.5 359V380 M718.5 359V388 M720.5 349V384 M722.5 355V377 M724.5 357V371 M726.5 355V373 M728.5 333V361 M730.5 351V365 M732.5 349V367 M734.5 353V428 M736.5 333V365 M738.5 333V357 M740.5 321V353 M742.5 317V349 M744.5 331V347 M746.5 331V347 M748.5 333V349 M750.5 321V337 M752.5 307V333 M754.5 309V327 M756.5 285V317 M758.5 257V295 M760.5 267V291 M762.5 273V289 M764.5 275V291 M766.5 277V297 M768.5 253V287 M770.5 220V265 M772.5 214V242 M774.5 234V253 M776.5 222V238 M778.5 226V242 M780.5 230V250 M782.5 238V257 M784.5 246V259 M786.5 248V257 M788.5 238V259 M790.5 203V257 M792.5 213V235 M794.5 215V237 M796.5 201V243 M798.5 215V239 M800.5 219V245 M802.5 219V247 M804.5 211V249 M806.5 225V267 M808.5 233V261 M810.5 223V255 M812.5 221V247 M814.5 199V247 M816.5 199V239 M818.5 152V307 M820.5 164V225 M822.5 185V215 M824.5 187V205 M826.5 172V199 M828.5 174V189 M830.5 178V197 M832.5 176V199 M834.5 180V193 M836.5 180V195 M838.5 144V189 M840.5 150V176 M842.5 150V176 M844.5 146V160 M846.5 152V164 M848.5 146V172 M850.5 156V207 M852.5 166V187 M854.5 168V185 M856.5 160V180 M858.5 152V166 M860.5 132V160 M862.5 130V164 M864.5 150V185 M866.5 156V205 M868.5 170V205 M870.5 168V191 M872.5 164V187 M874.5 162V176 M876.5 160V178 M878.5 158V176 M880.5 176V193 M882.5 189V199 M884.5 191V215 M886.5 193V215 M888.5 193V253 M890.5 235V265 M892.5 245V263 M894.5 247V291 M896.5 261V283 M898.5 261V277 M900.5 259V303 M902.5 263V287 M904.5 259V289 M906.5 271V297 M908.5 271V323 M910.5 265V309 M912.5 255V303 M914.5 236V275 M916.5 251V392 M918.5 329V398 M920.5 335V386 M922.5 367V388 M924.5 382V422 M926.5 396V452 M928.5 408V466 M930.5 436V474 M932.5 404V462 M934.5 372V434 M936.5 386V418 M938.5 319V374 M940.5 331V367 M942.5 343V367 M944.5 339V365 M946.5 341V374 M948.5 299V367 M950.5 307V349 M952.5 299V351 M954.5 327V351 M956.5 327V349 M958.5 327V382 M960.5 307V347 M962.5 311V367 M964.5 317V349 M966.5 315V353 M968.5 321V355 M970.5 339V355 M972.5 339V359 M974.5 331V353 M976.5 335V378 M978.5 337V363 M980.5 339V359 M982.5 345V386 M984.5 367V386 M986.5 370V386 M988.5 374V408 M990.5 380V410 M992.5 394V422 M994.5 386V416 M996.5 370V410 M998.5 370V410 M1000.5 349V386 M1002.5 339V374 M1004.5 333V370 M1006.5 351V367 M1008.5 353V388 M1010.5 349V386 M1012.5 347V368 M1014.5 343V363 M1016.5 333V355 M1018.5 331V357 M1020.5 325V347 M1022.5 323V345 M1024.5 307V335 M1026.5 305V327 M1028.5 307V333 M1030.5 291V319 M1032.5 279V311 M1034.5 275V303 M1036.5 279V297 M1038.5 273V295 M1040.5 261V295 M1042.5 247V291 M1044.5 255V291 M1046.5 239V281 M1048.5 249V277 M1050.5 233V273 M1052.5 237V275 M1054.5 223V329 M1056.5 251V354 M1058.5 247V297 M1060.5 253V287 M1062.5 261V295 M1064.5 269V299 M1066.5 275V301 M1068.5 281V305 M1070.5 287V309 M1072.5 279V303 M1074.5 275V299 M1076.5 279V291 M1078.5 253V317 M1080.5 291V331 M1082.5 299V317 M1084.5 307V325 M1086.5 311V331 M1088.5 305V331 M1090.5 309V341 M1092.5 315V343 M1094.5 319V347 M1096.5 327V362 M1098.5 319V350 M1100.5 311V343 M1102.5 315V341 M1104.5 315V333 M1106.5 261V339 M1108.5 257V273 M1110.5 265V275" stroke="#00ff00" stroke-width="1" fill="none"/>
<line x1="1064" y1="225" x2="1227" y2="227.5" stroke="#9966cc" stroke-width="4"/>
<g transform="translate(932,483) rotate(-63.34)" opacity="0.6" filter="url(#blur)"><line x1="0" y1="0" x2="258.1" y2="0" stroke="#505050" stroke-width="4"/><path d="M274.1 0 L254.1 -8.5 L254.1 8.5 Z" fill="#505050"/></g>
<g transform="translate(928,479) rotate(-63.34)"><line x1="0" y1="0" x2="258.1" y2="0" stroke="#c00000" stroke-width="4"/><path d="M274.1 0 L254.1 -8.5 L254.1 8.5 Z" fill="#c00000"/></g>
<g transform="translate(1060,249) rotate(69.17)" opacity="0.6" filter="url(#blur)"><line x1="0" y1="0" x2="104.9" y2="0" stroke="#505050" stroke-width="4"/><path d="M120.9 0 L100.9 -8.5 L100.9 8.5 Z" fill="#505050"/></g>
<g transform="translate(1056,245) rotate(69.17)"><line x1="0" y1="0" x2="104.9" y2="0" stroke="#c00000" stroke-width="4"/><path d="M120.9 0 L100.9 -8.5 L100.9 8.5 Z" fill="#c00000"/></g>
<g transform="translate(1114,357) rotate(-70.91)" opacity="0.6" filter="url(#blur)"><line x1="0" y1="0" x2="94.1" y2="0" stroke="#505050" stroke-width="4"/><path d="M110.1 0 L90.1 -8.5 L90.1 8.5 Z" fill="#505050"/></g>
<g transform="translate(1110,353) rotate(-70.91)"><line x1="0" y1="0" x2="94.1" y2="0" stroke="#c00000" stroke-width="4"/><path d="M110.1 0 L90.1 -8.5 L90.1 8.5 Z" fill="#c00000"/></g>
<rect x="671.5" y="108.5" width="555" height="393" fill="none" stroke="#000"/>
<rect x="671.5" y="503.5" width="555" height="105" fill="none" stroke="#000"/>
<rect x="671.5" y="611.5" width="555" height="94" fill="none" stroke="#000"/>
<path d="M1107 108 H1117 L1112 113 Z" fill="#708090"/>
<line x1="1227" y1="119.4" x2="1230" y2="119.4" stroke="#000"/>
<text x="1232.6" y="122.10000000000001" font-size="9.5" fill="#000" text-anchor="start" font-weight="normal" textLength="32.5" lengthAdjust="spacingAndGlyphs" >101.810</text>
<line x1="1227" y1="153.8" x2="1230" y2="153.8" stroke="#000"/>
<text x="1232.6" y="156.54" font-size="9.5" fill="#000" text-anchor="start" font-weight="normal" textLength="32.5" lengthAdjust="spacingAndGlyphs" >101.740</text>
<line x1="1227" y1="188.3" x2="1230" y2="188.3" stroke="#000"/>
<text x="1232.6" y="190.98" font-size="9.5" fill="#000" text-anchor="start" font-weight="normal" textLength="32.5" lengthAdjust="spacingAndGlyphs" >101.670</text>
<line x1="1227" y1="222.7" x2="1230" y2="222.7" stroke="#000"/>
<text x="1232.6" y="225.42" font-size="9.5" fill="#000" text-anchor="start" font-weight="normal" textLength="32.5" lengthAdjust="spacingAndGlyphs" >101.600</text>
<line x1="1227" y1="257.2" x2="1230" y2="257.2" stroke="#000"/>
<text x="1232.6" y="259.85999999999996" font-size="9.5" fill="#000" text-anchor="start" font-weight="normal" textLength="32.5" lengthAdjust="spacingAndGlyphs" >101.535</text>
<line x1="1227" y1="291.6" x2="1230" y2="291.6" stroke="#000"/>
<text x="1232.6" y="294.3" font-size="9.5" fill="#000" text-anchor="start" font-weight="normal" textLength="32.5" lengthAdjust="spacingAndGlyphs" >101.465</text>
<line x1="1227" y1="326.0" x2="1230" y2="326.0" stroke="#000"/>
<text x="1232.6" y="328.73999999999995" font-size="9.5" fill="#000" text-anchor="start" font-weight="normal" textLength="32.5" lengthAdjust="spacingAndGlyphs" >101.395</text>
<line x1="1227" y1="360.5" x2="1230" y2="360.5" stroke="#000"/>
<text x="1232.6" y="363.18" font-size="9.5" fill="#000" text-anchor="start" font-weight="normal" textLength="32.5" lengthAdjust="spacingAndGlyphs" >101.325</text>
<line x1="1227" y1="394.9" x2="1230" y2="394.9" stroke="#000"/>
<text x="1232.6" y="397.61999999999995" font-size="9.5" fill="#000" text-anchor="start" font-weight="normal" textLength="32.5" lengthAdjust="spacingAndGlyphs" >101.255</text>
<line x1="1227" y1="429.4" x2="1230" y2="429.4" stroke="#000"/>
<text x="1232.6" y="432.06" font-size="9.5" fill="#000" text-anchor="start" font-weight="normal" textLength="32.5" lengthAdjust="spacingAndGlyphs" >101.185</text>
<line x1="1227" y1="463.8" x2="1230" y2="463.8" stroke="#000"/>
<text x="1232.6" y="466.49999999999994" font-size="9.5" fill="#000" text-anchor="start" font-weight="normal" textLength="32.5" lengthAdjust="spacingAndGlyphs" >101.115</text>
<line x1="1227" y1="498.2" x2="1230" y2="498.2" stroke="#000"/>
<text x="1232.6" y="500.94" font-size="9.5" fill="#000" text-anchor="start" font-weight="normal" textLength="32.5" lengthAdjust="spacingAndGlyphs" >101.045</text>
<rect x="1227" y="263" width="40" height="12" fill="#000000" />
<text x="1232.6" y="272.4" font-size="9.5" fill="#fff" text-anchor="start" font-weight="normal" textLength="32.5" lengthAdjust="spacingAndGlyphs" >101.508</text>
<text x="687.4" y="120.2" font-size="9.5" fill="#000" text-anchor="start" font-weight="normal" textLength="49.8" lengthAdjust="spacingAndGlyphs" >USDJPY,H1</text>
<text x="744.9" y="120.2" font-size="9.5" fill="#000" text-anchor="start" font-weight="normal" textLength="31.8" lengthAdjust="spacingAndGlyphs" >101.503</text>
<text x="780.8" y="120.2" font-size="9.5" fill="#000" text-anchor="start" font-weight="normal" textLength="31.8" lengthAdjust="spacingAndGlyphs" >101.514</text>
<text x="816.8" y="120.2" font-size="9.5" fill="#000" text-anchor="start" font-weight="normal" textLength="31.8" lengthAdjust="spacingAndGlyphs" >101.500</text>
<text x="852.7" y="120.2" font-size="9.5" fill="#000" text-anchor="start" font-weight="normal" textLength="31.8" lengthAdjust="spacingAndGlyphs" >101.508</text>
<path d="M675 115 H682 L678.5 119.5 Z" fill="#000"/>
<line x1="672" y1="543.5" x2="1226" y2="543.5" stroke="#000" stroke-dasharray="3 3"/>
<path d="M672.5 552.4 L678.8 553.3 L686.0 551.9 L693.2 548.8 L703.9 543.4 L712.9 539.8 L721.9 537.1 L729.1 535.3 L736.3 536.2 L743.5 538.0 L754.3 537.5 L765.0 536.2 L775.8 535.0 L781.2 535.3 L790.2 537.5 L799.2 538.9 L810.0 542.5 L820.7 544.0 L829.7 544.0 L836.9 542.5 L844.1 541.1 L851.3 542.2 L860.3 541.1 L869.3 542.2 L880.0 544.0 L887.2 547.0 L890.0 547.9 L897.2 550.1 L904.4 551.2 L913.4 550.6 L922.3 553.3 L928.6 554.2 L936.7 551.5 L945.7 547.0 L956.5 539.8 L965.5 537.1 L974.5 535.3 L981.6 535.0 L990.6 538.0 L997.8 541.6 L1005.0 542.9 L1015.8 542.5 L1026.6 539.8 L1037.3 536.2 L1048.1 534.4 L1053.5 533.9 L1060.7 537.1 L1069.7 539.8 L1080.5 543.4 L1089.5 547.0 L1098.4 549.4 L1105.6 548.3 L1109.6 546.1" stroke="#000" stroke-width="1" fill="none"/>
<path d="M672.5 566.8 L678.8 567.7 L686.0 567.7 L695.0 565.9 L707.5 564.1 L712.9 561.9 L725.5 559.1 L736.3 556.5 L745.3 552.4 L754.3 548.8 L765.0 542.5 L772.2 538.6 L777.6 535.3 L784.8 533.5 L795.6 531.8 L806.4 532.3 L817.1 532.6 L826.1 530.9 L833.3 529.6 L840.5 529.1 L847.7 527.8 L854.9 528.7 L863.9 529.1 L871.1 530.9 L880.0 533.2 L885.4 535.3 L890.0 537.1 L897.2 544.3 L904.4 547.6 L913.4 549.7 L922.3 556.9 L930.4 564.1 L938.5 565.0 L949.3 559.6 L961.9 556.0 L974.5 552.4 L983.4 552.4 L990.6 554.2 L996.0 555.1 L1005.0 551.5 L1015.8 548.8 L1026.6 544.0 L1039.1 538.9 L1051.7 534.4 L1058.9 535.3 L1069.7 536.2 L1080.5 538.0 L1091.3 540.7 L1102.0 543.4 L1107.4 543.4 L1110.1 541.6" stroke="#008000" stroke-width="2" fill="none"/>
<path d="M672.5 601.5 L674.3 603.6 L676.1 600.0 L679.7 582.1 L682.4 577.6 L685.1 575.8 L687.8 572.2 L690.5 569.5 L694.1 569.1 L697.6 560.5 L700.3 558.7 L703.9 563.2 L706.6 562.3 L711.1 550.6 L713.8 548.8 L717.4 548.8 L721.9 546.1 L726.4 543.4 L730.0 538.0 L731.8 536.2 L734.5 540.7 L738.1 538.0 L741.7 535.0 L747.1 533.9 L751.6 533.5 L756.1 526.4 L760.5 519.2 L765.0 521.0 L768.6 513.8 L772.2 509.8 L776.7 511.1 L781.2 514.7 L786.6 524.6 L791.1 522.8 L795.6 520.6 L801.0 524.6 L806.4 531.8 L810.0 536.8 L813.6 536.2 L818.9 533.2 L824.3 529.1 L829.7 525.5 L834.2 529.1 L839.6 524.6 L843.2 522.8 L847.7 522.4 L851.3 529.1 L854.0 535.0 L857.6 532.6 L862.1 528.2 L864.8 528.2 L868.4 539.8 L872.9 539.8 L876.4 538.9 L880.0 541.6 L883.6 548.8 L887.2 553.3 L890.8 562.3 L892.7 565.0 L897.2 571.3 L900.8 572.2 L905.3 570.9 L908.9 571.6 L911.6 570.4 L914.3 565.0 L917.0 567.7 L919.6 583.9 L923.2 591.1 L925.9 596.4 L930.4 603.6 L934.0 592.8 L937.6 578.5 L941.2 562.3 L943.9 558.7 L947.5 555.1 L952.0 543.4 L955.6 541.6 L959.2 544.0 L963.7 539.8 L969.1 538.9 L974.5 540.7 L978.1 540.7 L981.6 538.0 L985.2 544.3 L989.7 552.4 L993.3 556.9 L996.9 555.1 L1000.5 549.7 L1005.0 542.9 L1008.6 542.9 L1012.2 545.2 L1015.8 541.6 L1021.2 535.3 L1026.6 530.9 L1032.0 523.7 L1034.7 519.2 L1040.0 518.8 L1043.6 515.6 L1047.2 517.4 L1051.7 515.2 L1054.4 520.1 L1056.2 526.4 L1058.9 531.8 L1062.5 528.2 L1067.0 535.3 L1071.5 539.8 L1076.9 539.8 L1080.5 542.5 L1083.2 548.8 L1086.8 551.5 L1091.3 555.1 L1095.8 560.1 L1099.3 556.9 L1103.8 554.2 L1106.5 550.6 L1108.3 544.3 L1110.1 536.2" stroke="#ff0000" stroke-width="2" fill="none"/>
<text x="677" y="516.4" font-size="9.5" fill="#000" text-anchor="start" font-weight="normal" textLength="70" lengthAdjust="spacingAndGlyphs" >AO_Zotik 0.0350</text>
<text x="1230" y="513.2" font-size="9.5" fill="#000" text-anchor="start" font-weight="normal" textLength="28" lengthAdjust="spacingAndGlyphs" >0.2164</text>
<text x="1230" y="546" font-size="9.5" fill="#000" text-anchor="start" font-weight="normal" textLength="18.5" lengthAdjust="spacingAndGlyphs" >0.00</text>
<text x="1230" y="606" font-size="9.5" fill="#000" text-anchor="start" font-weight="normal" textLength="31.5" lengthAdjust="spacingAndGlyphs" >-0.3742</text>
<ellipse cx="1103" cy="546" rx="42.5" ry="31.5" fill="none" stroke="#000" stroke-opacity="0.18" stroke-width="4" filter="url(#blur)"/>
<ellipse cx="1100.8" cy="543" rx="42.5" ry="31.5" fill="none" stroke="#2f8a2a" stroke-width="2.2"/>
<line x1="672" y1="631.5" x2="1226" y2="631.5" stroke="#000" stroke-dasharray="11 5"/>
<line x1="672" y1="658.5" x2="1226" y2="658.5" stroke="#000" stroke-dasharray="11 5"/>
<line x1="672" y1="686.5" x2="1226" y2="686.5" stroke="#000" stroke-dasharray="11 5"/>
<path d="M672.5 679.7 L676.1 671.1 L678.3 668.1 L680.6 661.8 L683.3 669.1 L686.9 656.0 L690.5 662.4 L694.1 653.9 L697.6 666.0 L699.9 668.5 L702.1 667.5 L705.7 652.1 L708.4 621.6 L711.1 634.4 L713.8 644.7 L717.4 652.9 L721.0 665.6 L724.6 645.8 L726.8 643.2 L729.1 641.7 L732.7 644.4 L735.4 669.0 L737.2 627.9 L739.9 623.3 L743.5 630.1 L747.1 624.9 L750.7 618.7 L754.3 627.6 L757.8 618.5 L761.4 627.3 L765.0 616.2 L768.6 622.9 L772.2 617.9 L774.9 619.0 L777.6 618.6 L781.2 634.1 L784.8 641.4 L788.4 620.8 L792.0 623.7 L795.6 632.2 L799.2 634.2 L802.8 648.2 L806.4 657.5 L810.0 658.4 L811.8 676.5 L813.6 632.8 L815.3 615.7 L818.9 648.9 L822.5 627.8 L826.1 641.7 L829.7 624.0 L832.4 628.4 L835.1 634.8 L838.7 618.7 L841.4 625.2 L844.1 627.4 L847.7 620.7 L850.4 644.5 L852.6 637.0 L854.9 626.8 L857.6 621.6 L860.3 618.1 L863.9 654.8 L866.6 688.1 L869.3 664.0 L872.9 666.3 L876.4 653.1 L880.0 685.3 L883.6 691.8 L887.2 693.0 L890.8 696.3 L893.6 695.8 L895.8 693.9 L898.1 695.2 L900.3 691.0 L902.6 691.2 L904.8 690.0 L907.1 692.1 L909.8 680.5 L913.4 664.6 L916.1 688.9 L919.6 695.5 L921.9 695.3 L924.1 699.4 L926.4 697.6 L928.6 699.2 L932.2 681.3 L935.8 675.1 L938.5 649.5 L941.2 663.9 L944.8 659.0 L948.4 643.9 L952.0 655.8 L954.2 648.6 L956.5 643.1 L958.7 633.2 L961.0 624.3 L963.7 630.8 L966.4 624.9 L969.1 635.4 L972.7 638.0 L976.3 649.1 L979.8 660.2 L982.5 688.8 L985.2 701.7 L988.8 701.1 L992.4 691.2 L996.0 682.1 L999.6 659.9 L1001.4 650.6 L1005.0 641.1 L1006.8 657.1 L1010.4 644.9 L1014.0 631.3 L1017.6 614.0 L1019.7 617.0 L1021.8 616.7 L1023.9 615.6 L1026.1 616.7 L1028.4 617.2 L1032.0 622.3 L1035.6 624.2 L1039.1 624.9 L1042.7 625.0 L1045.4 632.2 L1048.1 618.3 L1050.4 618.3 L1052.6 618.0 L1054.4 678.6 L1057.1 644.8 L1060.7 629.6 L1063.0 641.1 L1065.2 653.2 L1067.4 660.6 L1069.7 666.0 L1073.3 659.2 L1075.5 649.2 L1077.8 633.8 L1080.5 670.8 L1084.1 675.4 L1087.7 677.9 L1091.3 681.7 L1094.9 694.8 L1098.4 675.8 L1100.7 679.3 L1102.9 680.2 L1105.6 620.0 L1107.4 629.3 L1109.6 627.8" stroke="#ff0000" stroke-width="1" fill="none"/>
<path d="M672.5 683.4 L676.1 678.6 L678.3 675.9 L680.6 671.6 L682.8 674.4 L685.1 678.6 L688.7 672.0 L692.3 676.3 L695.9 673.3 L699.4 677.5 L703.0 683.6 L706.6 678.6 L708.4 669.8 L712.0 677.0 L714.3 675.7 L716.5 677.5 L719.2 674.1 L721.9 675.4 L724.3 672.6 L726.7 673.8 L729.1 672.2 L731.8 674.2 L734.5 677.3 L736.3 671.2 L739.0 667.8 L741.7 666.7 L745.3 656.5 L748.0 652.6 L750.7 652.6 L754.3 645.3 L757.8 632.0 L761.4 627.5 L765.0 617.7 L768.6 619.1 L772.2 624.5 L775.8 620.5 L778.5 625.2 L781.2 626.4 L784.8 628.6 L788.4 624.2 L792.0 620.3 L794.7 622.1 L797.4 624.5 L800.1 625.9 L802.8 627.4 L805.5 625.5 L808.2 626.6 L811.8 631.9 L815.3 620.2 L818.9 628.3 L821.6 626.0 L824.3 624.7 L827.0 624.3 L829.7 622.9 L832.4 619.9 L835.1 618.9 L837.8 619.7 L840.5 620.6 L843.2 620.6 L845.9 618.8 L849.5 633.5 L852.2 629.6 L854.9 622.2 L857.6 619.7 L860.3 616.2 L863.9 634.7 L867.5 643.6 L871.1 638.5 L873.8 633.3 L876.4 631.5 L880.0 643.0 L882.7 647.2 L885.4 647.9 L888.1 662.1 L890.8 675.8 L893.6 683.9 L895.8 684.8 L898.1 688.7 L900.3 688.9 L902.6 690.0 L904.8 692.4 L907.1 695.6 L909.8 683.4 L913.4 672.3 L917.0 686.1 L919.6 693.7 L922.3 697.4 L925.0 697.8 L927.7 700.4 L930.0 697.3 L932.2 691.0 L934.5 685.5 L936.7 680.7 L940.3 672.2 L942.7 668.9 L945.1 665.2 L947.5 662.3 L949.9 664.7 L952.3 666.4 L954.7 667.0 L957.1 666.1 L959.5 665.3 L961.9 666.8 L964.1 668.2 L966.4 668.3 L968.6 667.7 L970.9 666.5 L973.6 666.9 L976.3 666.3 L978.9 670.8 L981.6 673.8 L984.0 678.5 L986.4 681.1 L988.8 681.6 L991.2 680.4 L993.6 680.7 L996.0 677.4 L998.7 669.5 L1001.4 658.4 L1004.1 661.6 L1006.8 664.3 L1009.2 659.6 L1011.6 656.5 L1014.0 653.1 L1016.5 651.9 L1018.9 649.5 L1021.4 645.3 L1023.9 645.1 L1026.6 618.5 L1029.3 619.8 L1032.0 622.2 L1034.4 621.4 L1036.8 617.8 L1039.1 615.6 L1041.8 622.7 L1044.5 629.2 L1048.1 616.0 L1050.4 616.7 L1052.6 619.0 L1054.4 648.7 L1056.7 637.6 L1058.9 626.2 L1061.6 632.7 L1064.3 640.0 L1066.5 644.6 L1068.8 647.7 L1071.0 644.3 L1073.3 644.6 L1076.0 641.6 L1078.7 637.6 L1080.5 655.9 L1082.9 656.6 L1085.3 656.0 L1087.7 657.4 L1090.1 658.6 L1092.5 660.1 L1094.9 663.3 L1097.5 662.2 L1100.2 663.2 L1103.8 666.1 L1106.5 633.3 L1109.6 640.3" stroke="#1e90ff" stroke-width="1" fill="none"/>
<path d="M672.5 686.5 L676.1 680.3 L678.3 678.5 L680.6 677.1 L682.8 678.2 L685.1 681.0 L688.7 676.3 L692.3 679.2 L695.9 676.8 L698.5 677.6 L701.2 680.9 L703.5 681.4 L705.7 683.0 L708.4 671.6 L710.7 674.8 L712.9 676.5 L715.6 674.7 L718.3 674.8 L721.0 674.1 L723.7 675.4 L726.4 674.8 L729.1 674.3 L731.8 677.1 L734.5 679.6 L737.2 672.0 L739.3 671.0 L741.4 669.1 L743.5 669.9 L746.2 668.2 L748.9 667.9 L751.6 663.9 L754.3 659.9 L757.8 656.2 L761.4 652.8 L763.7 649.3 L765.9 645.7 L768.2 646.1 L770.4 644.7 L772.7 644.2 L774.9 642.6 L777.2 644.5 L779.4 647.2 L782.1 646.2 L784.8 648.0 L788.4 639.3 L791.1 621.6 L793.3 619.9 L795.6 618.8 L798.3 620.0 L801.0 622.3 L803.7 620.8 L806.4 618.5 L809.1 620.6 L811.8 624.2 L815.3 613.7 L818.0 617.7 L820.7 621.6 L823.4 620.3 L826.1 617.8 L828.8 620.9 L831.5 623.5 L834.2 619.4 L836.9 617.5 L839.6 618.5 L842.3 616.8 L845.0 617.0 L847.7 618.6 L851.3 632.2 L853.5 626.3 L855.8 619.8 L858.0 618.1 L860.3 617.0 L863.9 623.3 L866.6 632.1 L868.8 628.9 L871.1 628.6 L873.8 625.7 L876.4 624.7 L879.1 626.9 L881.8 632.5 L884.1 635.2 L886.3 639.1 L889.9 659.4 L893.6 674.8 L895.8 675.6 L898.1 676.5 L900.3 677.7 L902.6 680.4 L904.8 682.2 L907.1 684.8 L910.7 686.3 L913.4 676.7 L917.0 691.5 L919.6 694.5 L922.3 696.8 L924.4 699.1 L926.5 699.8 L928.6 700.6 L932.2 689.6 L934.5 686.9 L936.7 683.1 L940.3 669.9 L943.9 671.5 L946.6 668.5 L949.3 661.0 L952.0 665.0 L954.7 668.5 L957.1 668.1 L959.5 665.7 L961.9 665.4 L964.3 666.4 L966.7 668.7 L969.1 667.9 L971.5 669.0 L973.9 669.7 L976.3 671.1 L978.9 673.2 L981.6 676.2 L984.0 679.7 L986.4 681.8 L988.8 684.1 L991.2 684.7 L993.6 685.1 L996.0 684.0 L998.7 676.6 L1001.4 671.3 L1004.1 674.4 L1006.8 675.7 L1009.0 674.2 L1011.3 671.4 L1013.5 668.9 L1015.8 666.8 L1018.0 664.8 L1020.3 663.3 L1022.5 660.8 L1024.8 659.9 L1027.0 655.1 L1029.3 652.6 L1031.5 648.2 L1033.8 642.7 L1036.5 642.8 L1039.1 639.6 L1042.7 627.7 L1045.4 621.6 L1048.1 614.8 L1050.4 616.5 L1052.6 618.6 L1054.4 635.9 L1057.1 631.3 L1059.8 623.2 L1061.9 629.7 L1064.0 633.1 L1066.1 638.1 L1068.8 637.4 L1071.5 635.6 L1073.6 633.5 L1075.7 631.6 L1077.8 629.4 L1080.5 644.8 L1082.9 649.3 L1085.3 651.2 L1087.7 656.6 L1090.1 659.2 L1092.5 664.4 L1094.9 666.9 L1097.5 663.7 L1100.2 658.4 L1103.8 664.6 L1106.5 630.2 L1109.6 635.0" stroke="#8a2be2" stroke-width="1.2" fill="none"/>
<path d="M672.5 693.5 L675.2 687.5 L677.9 686.9 L680.6 687.0 L683.3 686.2 L686.0 686.6 L688.2 687.1 L690.5 686.5 L692.7 684.9 L695.0 684.7 L697.6 686.0 L700.3 688.5 L703.9 689.9 L707.5 684.7 L710.2 686.5 L712.9 685.9 L715.6 686.1 L718.3 687.7 L721.0 686.4 L723.7 684.6 L726.4 684.9 L729.1 684.7 L731.8 685.5 L734.5 688.3 L738.1 681.8 L740.8 681.6 L743.5 680.5 L746.2 680.9 L748.9 682.6 L752.5 678.8 L755.2 677.3 L757.8 673.5 L760.5 672.9 L763.2 672.5 L765.9 669.5 L768.6 665.6 L771.0 666.3 L773.4 666.1 L775.8 664.9 L778.5 666.0 L781.2 668.9 L783.9 668.7 L786.6 668.5 L790.2 663.6 L792.9 663.1 L795.6 664.3 L798.3 665.1 L801.0 665.6 L803.7 667.5 L806.4 666.5 L809.1 666.0 L811.8 664.6 L815.3 662.4 L818.0 660.2 L820.7 660.2 L823.4 657.9 L826.1 657.4 L828.5 657.8 L830.9 657.5 L833.3 657.3 L836.0 655.6 L838.7 653.7 L841.4 653.6 L844.1 652.1 L846.8 655.6 L849.5 657.8 L852.2 657.2 L854.9 655.6 L857.6 652.1 L860.3 650.4 L863.0 655.1 L865.7 658.5 L868.4 656.3 L871.1 656.6 L873.8 656.8 L876.4 655.5 L879.1 657.1 L881.8 659.4 L884.5 661.4 L887.2 661.4 L889.5 665.6 L891.7 669.4 L893.6 671.1 L896.3 670.8 L899.0 670.4 L901.7 671.6 L904.4 671.8 L907.1 673.2 L909.8 675.5 L913.4 669.3 L917.0 684.8 L919.6 687.0 L922.3 686.8 L925.9 693.8 L929.5 698.7 L931.8 695.3 L934.0 691.9 L936.3 687.4 L938.5 684.2 L941.2 683.9 L943.9 684.8 L946.6 681.9 L949.3 678.9 L952.0 679.5 L954.7 682.2 L957.1 680.8 L959.5 680.6 L961.9 680.1 L964.3 681.1 L966.7 681.0 L969.1 680.8 L971.5 681.8 L973.9 681.1 L976.3 681.4 L978.9 684.4 L981.6 685.4 L984.0 687.9 L986.4 689.1 L988.8 692.4 L991.5 691.3 L994.2 690.2 L996.9 688.8 L999.6 685.2 L1002.0 684.6 L1004.4 684.2 L1006.8 683.6 L1009.0 682.6 L1011.3 682.5 L1013.5 680.3 L1015.8 679.4 L1018.0 679.1 L1020.3 678.6 L1022.5 677.6 L1024.8 677.8 L1027.2 674.9 L1029.6 673.3 L1032.0 671.6 L1034.4 669.6 L1036.8 668.2 L1039.1 666.6 L1041.8 668.2 L1044.5 667.5 L1048.1 665.5 L1050.4 664.8 L1052.6 665.8 L1054.4 676.6 L1056.7 671.0 L1058.9 667.3 L1061.6 668.5 L1064.3 670.1 L1067.0 669.1 L1069.7 669.8 L1073.3 662.3 L1075.5 660.9 L1077.8 660.1 L1080.5 667.1 L1082.9 665.8 L1085.3 667.4 L1087.7 668.2 L1089.8 668.6 L1091.9 668.9 L1094.0 671.6 L1096.0 669.5 L1098.1 669.5 L1100.2 668.0 L1103.8 668.0 L1106.5 652.9 L1110.1 653.8" stroke="#000" stroke-width="2.4" fill="none"/>
<text x="676" y="624.4" font-size="9.5" fill="#000" text-anchor="start" font-weight="normal" textLength="161" lengthAdjust="spacingAndGlyphs" >WPR_VSmark(21|55|77|277) -44.3325</text>
<text x="1230" y="621.9" font-size="9.5" fill="#000" text-anchor="start" font-weight="normal" textLength="4.8" lengthAdjust="spacingAndGlyphs" >0</text>
<text x="1230" y="634.4" font-size="9.5" fill="#000" text-anchor="start" font-weight="normal" textLength="12.3" lengthAdjust="spacingAndGlyphs" >-20</text>
<text x="1230" y="661.9" font-size="9.5" fill="#000" text-anchor="start" font-weight="normal" textLength="12.3" lengthAdjust="spacingAndGlyphs" >-50</text>
<text x="1230" y="688.9" font-size="9.5" fill="#000" text-anchor="start" font-weight="normal" textLength="12.3" lengthAdjust="spacingAndGlyphs" >-80</text>
<text x="1230" y="701.9" font-size="9.5" fill="#000" text-anchor="start" font-weight="normal" textLength="17.5" lengthAdjust="spacingAndGlyphs" >-100</text>
<line x1="1227" y1="612.5" x2="1229" y2="612.5" stroke="#000"/>
<line x1="1227" y1="631.5" x2="1229" y2="631.5" stroke="#000"/>
<line x1="1227" y1="658.5" x2="1229" y2="658.5" stroke="#000"/>
<line x1="1227" y1="686.5" x2="1229" y2="686.5" stroke="#000"/>
<line x1="1227" y1="704.5" x2="1229" y2="704.5" stroke="#000"/>
<line x1="672.5" y1="706" x2="672.5" y2="710" stroke="#000"/>
<text x="672" y="717.7" font-size="9.5" fill="#000" text-anchor="start" font-weight="normal" textLength="45.7" lengthAdjust="spacingAndGlyphs" >10 Jul 2014</text>
<line x1="736.5" y1="706" x2="736.5" y2="710" stroke="#000"/>
<text x="736" y="717.7" font-size="9.5" fill="#000" text-anchor="start" font-weight="normal" textLength="48.7" lengthAdjust="spacingAndGlyphs" >14 Jul 00:00</text>
<line x1="800.5" y1="706" x2="800.5" y2="710" stroke="#000"/>
<text x="800" y="717.7" font-size="9.5" fill="#000" text-anchor="start" font-weight="normal" textLength="48.7" lengthAdjust="spacingAndGlyphs" >15 Jul 08:00</text>
<line x1="864.5" y1="706" x2="864.5" y2="710" stroke="#000"/>
<text x="864" y="717.7" font-size="9.5" fill="#000" text-anchor="start" font-weight="normal" textLength="48.7" lengthAdjust="spacingAndGlyphs" >16 Jul 16:00</text>
<line x1="928.5" y1="706" x2="928.5" y2="710" stroke="#000"/>
<text x="928" y="717.7" font-size="9.5" fill="#000" text-anchor="start" font-weight="normal" textLength="48.7" lengthAdjust="spacingAndGlyphs" >18 Jul 00:00</text>
<line x1="992.5" y1="706" x2="992.5" y2="710" stroke="#000"/>
<text x="992" y="717.7" font-size="9.5" fill="#000" text-anchor="start" font-weight="normal" textLength="48.7" lengthAdjust="spacingAndGlyphs" >21 Jul 08:00</text>
<line x1="1056.5" y1="706" x2="1056.5" y2="710" stroke="#000"/>
<text x="1056" y="717.7" font-size="9.5" fill="#000" text-anchor="start" font-weight="normal" textLength="48.7" lengthAdjust="spacingAndGlyphs" >22 Jul 16:00</text>
<rect x="0" y="735" width="1280" height="21" fill="#e3e3e3" />
<line x1="0" y1="734.5" x2="1280" y2="734.5" stroke="#ffffff" stroke-width="1" />
<line x1="0" y1="735.5" x2="1280" y2="735.5" stroke="#101010" stroke-width="1" />
<line x1="0" y1="736.5" x2="1280" y2="736.5" stroke="#f4f4f4" stroke-width="1" />
<line x1="0" y1="755.5" x2="1280" y2="755.5" stroke="#f8f8f8" stroke-width="1" />
<rect x="0" y="736" width="2" height="19" fill="#a8a8a8" />
<text x="14" y="748" font-size="10" fill="#8c8c9c" text-anchor="start" font-weight="normal" textLength="57.5" lengthAdjust="spacingAndGlyphs" >EURUSD,H1</text>
<text x="93.5" y="748" font-size="10" fill="#8c8c9c" text-anchor="start" font-weight="normal" textLength="63" lengthAdjust="spacingAndGlyphs" >GBPUSD,M15</text>
<text x="179" y="748" font-size="10" fill="#8c8c9c" text-anchor="start" font-weight="normal" textLength="56.5" lengthAdjust="spacingAndGlyphs" >GBPUSD,H4</text>
<text x="258.5" y="748" font-size="10" fill="#8c8c9c" text-anchor="start" font-weight="normal" textLength="65" lengthAdjust="spacingAndGlyphs" >AUDUSD,M15</text>
<text x="346.5" y="748" font-size="10" fill="#8c8c9c" text-anchor="start" font-weight="normal" textLength="57.5" lengthAdjust="spacingAndGlyphs" >AUDUSD,H1</text>
<text x="426.5" y="748" font-size="10" fill="#8c8c9c" text-anchor="start" font-weight="normal" textLength="65" lengthAdjust="spacingAndGlyphs" >NZDUSD,M15</text>
<text x="513.5" y="748" font-size="10" fill="#8c8c9c" text-anchor="start" font-weight="normal" textLength="58" lengthAdjust="spacingAndGlyphs" >NZDUSD,H1</text>
<text x="595" y="748" font-size="10" fill="#8c8c9c" text-anchor="start" font-weight="normal" textLength="66" lengthAdjust="spacingAndGlyphs" >USDCHF,M15</text>
<text x="682" y="748" font-size="10" fill="#8c8c9c" text-anchor="start" font-weight="normal" textLength="58" lengthAdjust="spacingAndGlyphs" >USDCHF,H4</text>
<text x="762.5" y="748" font-size="10" fill="#8c8c9c" text-anchor="start" font-weight="normal" textLength="65" lengthAdjust="spacingAndGlyphs" >USDCAD,M15</text>
<text x="850" y="748" font-size="10" fill="#8c8c9c" text-anchor="start" font-weight="normal" textLength="58.5" lengthAdjust="spacingAndGlyphs" >USDCAD,H4</text>
<text x="929" y="748" font-size="10" fill="#8c8c9c" text-anchor="start" font-weight="normal" textLength="63.5" lengthAdjust="spacingAndGlyphs" >EURGBP,M15</text>
<text x="1015" y="748" font-size="10" fill="#8c8c9c" text-anchor="start" font-weight="normal" textLength="56.5" lengthAdjust="spacingAndGlyphs" >EURGBP,H1</text>
<text x="1094" y="748" font-size="10" fill="#8c8c9c" text-anchor="start" font-weight="normal" textLength="61" lengthAdjust="spacingAndGlyphs" >USDJPY,M15</text>
<line x1="84.5" y1="738" x2="84.5" y2="751" stroke="#7a7a7a" stroke-width="1" />
<line x1="168.5" y1="738" x2="168.5" y2="751" stroke="#7a7a7a" stroke-width="1" />
<line x1="251.5" y1="738" x2="251.5" y2="751" stroke="#7a7a7a" stroke-width="1" />
<line x1="336.5" y1="738" x2="336.5" y2="751" stroke="#7a7a7a" stroke-width="1" />
<line x1="416.5" y1="738" x2="416.5" y2="751" stroke="#7a7a7a" stroke-width="1" />
<line x1="504.5" y1="738" x2="504.5" y2="751" stroke="#7a7a7a" stroke-width="1" />
<line x1="584.5" y1="738" x2="584.5" y2="751" stroke="#7a7a7a" stroke-width="1" />
<line x1="673.5" y1="738" x2="673.5" y2="751" stroke="#7a7a7a" stroke-width="1" />
<line x1="752.5" y1="738" x2="752.5" y2="751" stroke="#7a7a7a" stroke-width="1" />
<line x1="840.5" y1="738" x2="840.5" y2="751" stroke="#7a7a7a" stroke-width="1" />
<line x1="921.5" y1="738" x2="921.5" y2="751" stroke="#7a7a7a" stroke-width="1" />
<line x1="1005.5" y1="738" x2="1005.5" y2="751" stroke="#7a7a7a" stroke-width="1" />
<line x1="1084.5" y1="738" x2="1084.5" y2="751" stroke="#7a7a7a" stroke-width="1" />
<path d="M1168.5 736 V755.5 H1243.5 V736" fill="#ffffff" stroke="#101010"/>
<rect x="1169" y="735" width="74" height="2" fill="#ffffff" />
<text x="1177.5" y="748" font-size="10" fill="#0a0a28" text-anchor="start" font-weight="normal" textLength="55" lengthAdjust="spacingAndGlyphs" >USDJPY,H1</text>
<path d="M1251 745 l5 -4 v8 z M1273 745 l-5 -4 v8 z" fill="#000"/>
</svg></body></html>
